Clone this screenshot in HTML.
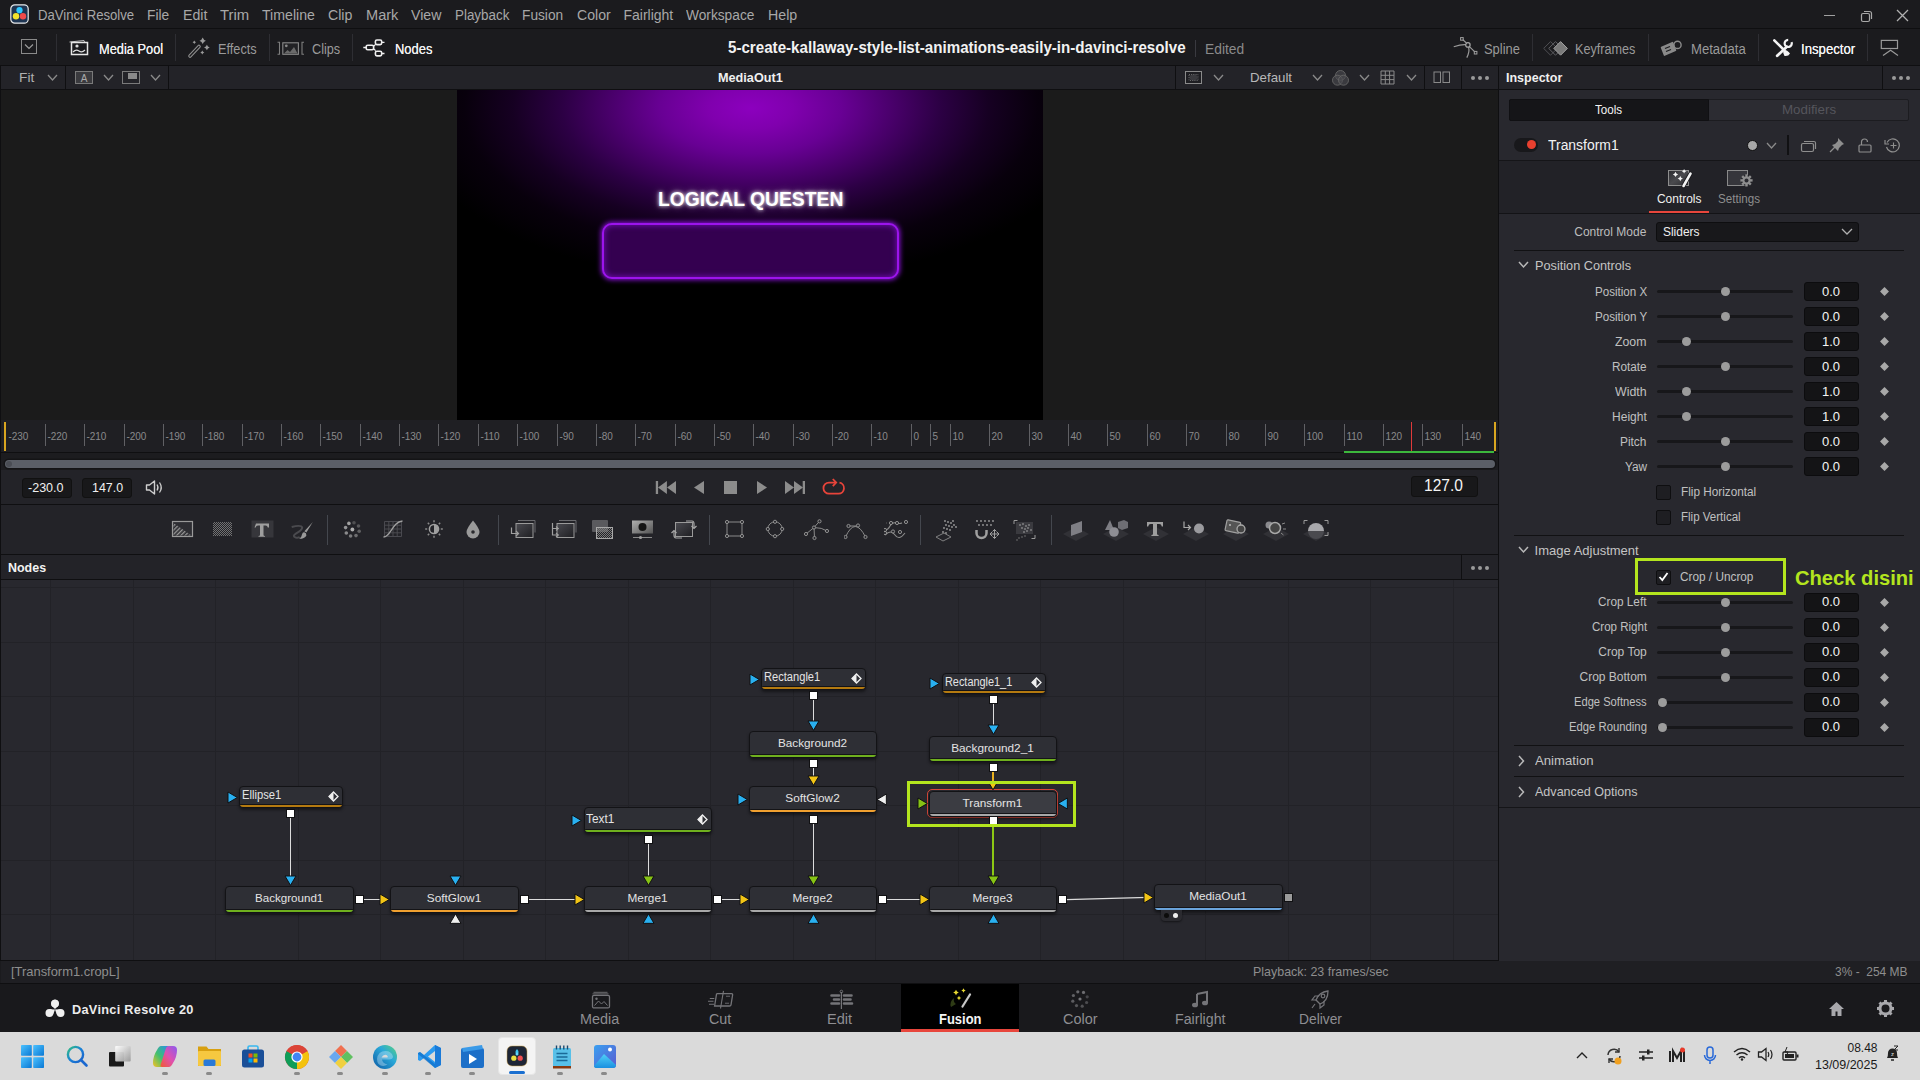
<!DOCTYPE html><html><head><meta charset="utf-8"><title>DaVinci Resolve</title><style>
*{margin:0;padding:0;box-sizing:border-box}
html,body{width:1920px;height:1080px;overflow:hidden;background:#1b1b1e;font-family:"Liberation Sans",sans-serif}
div,span,svg{position:absolute}
.t{transform-origin:0 0}
</style></head><body><div style="left:0px;top:0px;width:1920px;height:28px;background:#1b1b1e;"></div>
<div style="left:0px;top:28px;width:1920px;height:1px;background:#0f0f11;"></div>
<svg style="left:10px;top:4px;" width="20" height="21" viewBox="0 0 20 21"><rect x="0.8" y="0.8" width="17.4" height="18.4" rx="4" fill="#1e3552" stroke="#e8e8e8" stroke-width="1.2"/>
      <circle cx="9.5" cy="6.2" r="3.1" fill="#2ec8ff"/><circle cx="6" cy="12.2" r="3.2" fill="#f2e22a"/><circle cx="13" cy="12.2" r="3.2" fill="#f04a4a"/></svg>
<span class="t" style="left:38.46px;transform:scaleX(0.9386);top:8.10px;font-size:14px;line-height:14px;color:#a8a8a8;font-weight:400;white-space:nowrap;">DaVinci Resolve</span>
<span class="t" style="left:147.46px;transform:scaleX(0.9830);top:8.10px;font-size:14px;line-height:14px;color:#a8a8a8;font-weight:400;white-space:nowrap;">File</span>
<span class="t" style="left:182.96px;transform:scaleX(1.0106);top:8.10px;font-size:14px;line-height:14px;color:#a8a8a8;font-weight:400;white-space:nowrap;">Edit</span>
<span class="t" style="left:220.46px;transform:scaleX(1.0623);top:8.10px;font-size:14px;line-height:14px;color:#a8a8a8;font-weight:400;white-space:nowrap;">Trim</span>
<span class="t" style="left:262.46px;transform:scaleX(1.0093);top:8.10px;font-size:14px;line-height:14px;color:#a8a8a8;font-weight:400;white-space:nowrap;">Timeline</span>
<span class="t" style="left:328.16px;transform:scaleX(1.0106);top:8.10px;font-size:14px;line-height:14px;color:#a8a8a8;font-weight:400;white-space:nowrap;">Clip</span>
<span class="t" style="left:365.96px;transform:scaleX(1.0403);top:8.10px;font-size:14px;line-height:14px;color:#a8a8a8;font-weight:400;white-space:nowrap;">Mark</span>
<span class="t" style="left:411.16px;transform:scaleX(1.0095);top:8.10px;font-size:14px;line-height:14px;color:#a8a8a8;font-weight:400;white-space:nowrap;">View</span>
<span class="t" style="left:454.66px;transform:scaleX(0.9572);top:8.10px;font-size:14px;line-height:14px;color:#a8a8a8;font-weight:400;white-space:nowrap;">Playback</span>
<span class="t" style="left:522.16px;transform:scaleX(0.9797);top:8.10px;font-size:14px;line-height:14px;color:#a8a8a8;font-weight:400;white-space:nowrap;">Fusion</span>
<span class="t" style="left:576.66px;transform:scaleX(1.0063);top:8.10px;font-size:14px;line-height:14px;color:#a8a8a8;font-weight:400;white-space:nowrap;">Color</span>
<span class="t" style="left:623.46px;top:8.10px;font-size:14px;line-height:14px;color:#a8a8a8;font-weight:400;white-space:nowrap;">Fairlight</span>
<span class="t" style="left:686.16px;transform:scaleX(0.9799);top:8.10px;font-size:14px;line-height:14px;color:#a8a8a8;font-weight:400;white-space:nowrap;">Workspace</span>
<span class="t" style="left:767.96px;transform:scaleX(1.0133);top:8.10px;font-size:14px;line-height:14px;color:#a8a8a8;font-weight:400;white-space:nowrap;">Help</span>
<div style="left:1824px;top:15px;width:11px;height:1px;background:#a0a0a0;"></div>
<svg style="left:1858px;top:8px;" width="16" height="15" viewBox="0 0 16 15"><rect x="3.5" y="5.5" width="8" height="8" rx="1.5" fill="none" stroke="#a8a8a8" stroke-width="1.2"/><path d="M6 3.5 h5.5 a2 2 0 0 1 2 2 v5.5" fill="none" stroke="#a8a8a8" stroke-width="1.2"/></svg>
<svg style="left:1895px;top:8px;" width="15" height="15" viewBox="0 0 15 15"><path d="M2 2 L13 13 M13 2 L2 13" stroke="#b0b0b0" stroke-width="1.3"/></svg>
<div style="left:0px;top:29px;width:1920px;height:36px;background:#1b1b1e;"></div>
<div style="left:0px;top:65px;width:1920px;height:1px;background:#0f0f11;"></div>
<svg style="left:20px;top:38px;" width="18" height="17" viewBox="0 0 18 17"><rect x="1.5" y="1.5" width="15" height="14" fill="none" stroke="#8a8a8a" stroke-width="1"/><polyline points="5,6.5 9,10.5 13,6.5" fill="none" stroke="#9a9a9a" stroke-width="1.2"/></svg>
<div style="left:56px;top:34px;width:1px;height:27px;background:#2e2e33;"></div>
<svg style="left:67px;top:38px;" width="23" height="19" viewBox="0 0 23 19"><path d="M2.5 4 L17 2.5 L17.5 4" fill="none" stroke="#bbb" stroke-width="1"/><rect x="4.5" y="4.5" width="16" height="12" fill="none" stroke="#e6e6e6" stroke-width="1.5"/><circle cx="10" cy="8" r="1.6" fill="#ddd"/><path d="M6 14 q3-3 6-1 t6-1" fill="none" stroke="#ddd" stroke-width="1.2"/></svg>
<span class="t" style="left:99.16px;transform:scaleX(0.9162);top:42.10px;font-size:14px;line-height:14px;color:#f0f0f0;font-weight:400;white-space:nowrap;text-shadow:0 0 0.4px #f0f0f0;">Media Pool</span>
<div style="left:175px;top:34px;width:1px;height:27px;background:#2e2e33;"></div>
<svg style="left:187px;top:37px;" width="24" height="22" viewBox="0 0 24 22"><path d="M3 19 L12 9.5" stroke="#8e8e8e" stroke-width="3.6" stroke-linecap="round"/><path d="M3 19 L12 9.5" stroke="#1b1b1e" stroke-width="1.4" stroke-linecap="round"/><path d="M15.7 0.5999999999999996 Q16.5 3.0 18.9 3.8 Q16.5 4.6 15.7 7.0 Q14.899999999999999 4.6 12.5 3.8 Q14.899999999999999 3.0 15.7 0.5999999999999996z" fill="#9a9a9a"/><path d="M19.9 7.7 Q20.599999999999998 9.8 22.7 10.5 Q20.599999999999998 11.2 19.9 13.3 Q19.2 11.2 17.099999999999998 10.5 Q19.2 9.8 19.9 7.7z" fill="#9a9a9a"/><path d="M15.3 13.6 Q15.8 15.1 17.3 15.6 Q15.8 16.1 15.3 17.6 Q14.8 16.1 13.3 15.6 Q14.8 15.1 15.3 13.6z" fill="#9a9a9a"/><path d="M7.3 3.5999999999999996 Q7.725 4.875 9.0 5.3 Q7.725 5.725 7.3 7.0 Q6.875 5.725 5.6 5.3 Q6.875 4.875 7.3 3.5999999999999996z" fill="#9a9a9a"/></svg>
<span class="t" style="left:218.46px;transform:scaleX(0.9091);top:42.10px;font-size:14px;line-height:14px;color:#9a9a9a;font-weight:400;white-space:nowrap;">Effects</span>
<div style="left:269px;top:34px;width:1px;height:27px;background:#2e2e33;"></div>
<svg style="left:277px;top:40px;" width="28" height="16" viewBox="0 0 28 16"><path d="M0.5 2.3 h2 v12 h-2" fill="none" stroke="#7e7e7e" stroke-width="1.1"/><rect x="5.8" y="2.8" width="15.6" height="11.5" fill="#222225" stroke="#8a8a8a" stroke-width="1.1"/><circle cx="9.3" cy="5.8" r="1.4" fill="#8a8a8a"/><path d="M7 13.5 l3.5-3.5 2.5 2 4-5 3.5 6.5z" fill="#6a6a6a"/><path d="M27 2.3 h-2 v12 h2" fill="none" stroke="#7e7e7e" stroke-width="1.1"/></svg>
<span class="t" style="left:312.16px;transform:scaleX(0.9054);top:42.10px;font-size:14px;line-height:14px;color:#9a9a9a;font-weight:400;white-space:nowrap;">Clips</span>
<div style="left:352px;top:34px;width:1px;height:27px;background:#2e2e33;"></div>
<svg style="left:362px;top:38px;" width="24" height="20" viewBox="0 0 24 20"><rect x="4.2" y="7.2" width="7.4" height="4.6" rx="1.5" fill="none" stroke="#eeeeee" stroke-width="1.6"/><rect x="13.4" y="2" width="6.3" height="4.6" rx="1.5" fill="none" stroke="#eeeeee" stroke-width="1.6"/><rect x="13.4" y="13.25" width="6.3" height="4.6" rx="1.5" fill="none" stroke="#eeeeee" stroke-width="1.6"/><path d="M1.3 9.5 h2.9 M19.7 4.3 h2.8 M19.7 15.5 h2.8 M11.6 8.3 L13.6 6.4 M11.6 10.7 L13.6 12.6" fill="none" stroke="#eeeeee" stroke-width="1.3"/></svg>
<span class="t" style="left:395.46px;transform:scaleX(0.9237);top:42.10px;font-size:14px;line-height:14px;color:#f0f0f0;font-weight:400;white-space:nowrap;text-shadow:0 0 0.4px #f0f0f0;">Nodes</span>
<span class="t" style="left:728.48px;transform:scaleX(0.8902);top:39.05px;font-size:17px;line-height:17px;color:#f2f2f2;font-weight:700;white-space:nowrap;">5-create-kallaway-style-list-animations-easily-in-davinci-resolve</span>
<div style="left:1195px;top:40px;width:1px;height:17px;background:#3a3a40;"></div>
<span class="t" style="left:1205.46px;transform:scaleX(0.9868);top:42.10px;font-size:14px;line-height:14px;color:#8a8a8a;font-weight:400;white-space:nowrap;">Edited</span>
<svg style="left:1451px;top:35px;" width="30" height="24" viewBox="0 0 30 24"><path d="M2.75 11.75 Q10 9.3 14.8 9.6 M17.6 12.2 Q18.8 17 15.8 22.6 M15.6 8.2 L11.8 4.6 M18.4 11.6 L23.3 16.4" fill="none" stroke="#9a9a9a" stroke-width="1.2"/><circle cx="16.9" cy="9.9" r="2.2" fill="none" stroke="#a8a8a8" stroke-width="1.2"/><rect x="9.6" y="2.6" width="2.6" height="2.6" fill="none" stroke="#a0a0a0" stroke-width="1"/><rect x="23.3" y="16.4" width="2.6" height="2.6" fill="none" stroke="#a0a0a0" stroke-width="1"/></svg>
<span class="t" style="left:1484.16px;transform:scaleX(0.9218);top:42.10px;font-size:14px;line-height:14px;color:#9a9a9a;font-weight:400;white-space:nowrap;">Spline</span>
<div style="left:1532px;top:34px;width:1px;height:27px;background:#2e2e33;"></div>
<svg style="left:1543px;top:40px;" width="28" height="17" viewBox="0 0 28 17"><path d="M7.5 1.6 L14.3 8.4 L7.5 15.2 L0.7000000000000002 8.4z" fill="none" stroke="#505054" stroke-width="1"/><path d="M12.5 1.6 L19.3 8.4 L12.5 15.2 L5.7 8.4z" fill="none" stroke="#606064" stroke-width="1"/><path d="M17.6 1.6 L24.400000000000002 8.4 L17.6 15.2 L10.8 8.4z" fill="#7a7a7a" stroke="#a0a0a0" stroke-width="1"/></svg>
<span class="t" style="left:1575.46px;transform:scaleX(0.9022);top:42.10px;font-size:14px;line-height:14px;color:#9a9a9a;font-weight:400;white-space:nowrap;">Keyframes</span>
<div style="left:1648px;top:34px;width:1px;height:27px;background:#2e2e33;"></div>
<svg style="left:1660px;top:38px;" width="24" height="20" viewBox="0 0 24 20"><path d="M1.5 9.5 L12.5 4.6 L15.5 12.2 L4.5 17.1z" fill="#8a8a8a" stroke="#8a8a8a" stroke-width="1.5" stroke-linejoin="round"/><path d="M5 10.5 l5-2 M6 13.5 l5-2" stroke="#1b1b1e" stroke-width="1.3"/><circle cx="17.5" cy="6.9" r="3.6" fill="none" stroke="#8a8a8a" stroke-width="1.4"/></svg>
<span class="t" style="left:1691.16px;transform:scaleX(0.9367);top:42.10px;font-size:14px;line-height:14px;color:#9a9a9a;font-weight:400;white-space:nowrap;">Metadata</span>
<div style="left:1758px;top:34px;width:1px;height:27px;background:#2e2e33;"></div>
<svg style="left:1772px;top:37px;" width="22" height="22" viewBox="0 0 22 22"><path d="M2.3 3.3 L12 13" stroke="#f4f4f4" stroke-width="2.6" stroke-linecap="round"/><path d="M11.5 12.5 q4 0.5 6.5 4 q-1.5 3 -5.5 2.5 q-2 -3 -1-6.5z" fill="#f4f4f4"/><path d="M19.6 5.2 a3.6 3.6 0 1 1 -3.4 -2.4" fill="none" stroke="#f4f4f4" stroke-width="2.2"/><path d="M14.8 9.8 L5.2 18.8" stroke="#f4f4f4" stroke-width="2.8" stroke-linecap="round"/></svg>
<span class="t" style="left:1801.16px;transform:scaleX(0.9407);top:42.10px;font-size:14px;line-height:14px;color:#f4f4f4;font-weight:400;white-space:nowrap;text-shadow:0 0 0.4px #f0f0f0;">Inspector</span>
<div style="left:1867px;top:34px;width:1px;height:27px;background:#2e2e33;"></div>
<svg style="left:1878px;top:38px;" width="22" height="20" viewBox="0 0 22 20"><rect x="3.3" y="2.4" width="16.2" height="8.1" fill="none" stroke="#9a9a9a" stroke-width="1.2"/><path d="M5 17.5 L12.6 12.2 L20 17.5" fill="none" stroke="#9a9a9a" stroke-width="1.2"/></svg>
<div style="left:0px;top:66px;width:1498px;height:23px;background:#232328;"></div>
<div style="left:0px;top:89px;width:1498px;height:1px;background:#0f0f11;"></div>
<div style="left:0px;top:66px;width:1px;height:894px;background:#0f0f11;"></div>
<div style="left:65px;top:66px;width:1px;height:23px;background:#0f0f11;"></div>
<div style="left:168px;top:66px;width:1px;height:23px;background:#0f0f11;"></div>
<span class="t" style="left:18.52px;transform:scaleX(1.0558);top:71.45px;font-size:13px;line-height:13px;color:#b0b0b0;font-weight:400;white-space:nowrap;">Fit</span>
<svg style="left:47px;top:74px;" width="11" height="8" viewBox="0 0 11 8"><polyline points="1,1 5.5,6 10,1" fill="none" stroke="#8a8a8a" stroke-width="1.3"/></svg>
<svg style="left:74px;top:70px;" width="20" height="16" viewBox="0 0 20 16"><rect x="1.5" y="1.5" width="17" height="12" fill="#3a3a3e" stroke="#7a7a7a" stroke-width="1"/><text x="10" y="12" font-size="10" font-family="Liberation Sans" fill="#aaa" text-anchor="middle">A</text></svg>
<svg style="left:103px;top:74px;" width="11" height="8" viewBox="0 0 11 8"><polyline points="1,1 5.5,6 10,1" fill="none" stroke="#8a8a8a" stroke-width="1.3"/></svg>
<svg style="left:121px;top:70px;" width="20" height="16" viewBox="0 0 20 16"><rect x="1.5" y="1.5" width="17" height="12" fill="none" stroke="#7a7a7a" stroke-width="1"/><rect x="7" y="3" width="9" height="6" fill="#8a8a8a"/></svg>
<svg style="left:150px;top:74px;" width="11" height="8" viewBox="0 0 11 8"><polyline points="1,1 5.5,6 10,1" fill="none" stroke="#8a8a8a" stroke-width="1.3"/></svg>
<span class="t" style="left:718.02px;transform:scaleX(0.9743);top:71.45px;font-size:13px;line-height:13px;color:#f0f0f0;font-weight:700;white-space:nowrap;">MediaOut1</span>
<div style="left:1175px;top:66px;width:1px;height:23px;background:#0f0f11;"></div>
<svg style="left:1184px;top:70px;" width="20" height="15" viewBox="0 0 20 15"><rect x="1.5" y="1.5" width="16" height="12" fill="#1e1e22" stroke="#8a8a8a" stroke-width="1"/><ellipse cx="9.5" cy="7.5" rx="4" ry="3" fill="#3a3a3e"/><rect x="5" y="4.5" width="9" height="6" fill="none" stroke="#8a8a8a" stroke-width="0.8" stroke-dasharray="0.9,1.3"/></svg>
<svg style="left:1213px;top:74px;" width="11" height="8" viewBox="0 0 11 8"><polyline points="1,1 5.5,6 10,1" fill="none" stroke="#8a8a8a" stroke-width="1.3"/></svg>
<span class="t" style="left:1250.02px;transform:scaleX(1.0208);top:71.45px;font-size:13px;line-height:13px;color:#b8b8b8;font-weight:400;white-space:nowrap;">Default</span>
<svg style="left:1312px;top:74px;" width="11" height="8" viewBox="0 0 11 8"><polyline points="1,1 5.5,6 10,1" fill="none" stroke="#8a8a8a" stroke-width="1.3"/></svg>
<svg style="left:1331px;top:69px;" width="19" height="18" viewBox="0 0 19 18"><circle cx="9.5" cy="6.5" r="5" fill="#4a4a4e" fill-opacity="0.6" stroke="#666" stroke-width="0.9"/><circle cx="6.5" cy="11.2" r="5" fill="#4a4a4e" fill-opacity="0.6" stroke="#666" stroke-width="0.9"/><circle cx="12.5" cy="11.2" r="5" fill="#4a4a4e" fill-opacity="0.6" stroke="#666" stroke-width="0.9"/></svg>
<svg style="left:1359px;top:74px;" width="11" height="8" viewBox="0 0 11 8"><polyline points="1,1 5.5,6 10,1" fill="none" stroke="#8a8a8a" stroke-width="1.3"/></svg>
<svg style="left:1380px;top:70px;" width="15" height="15" viewBox="0 0 15 15"><path d="M1 1 h13 v13 h-13z M1 5.3 h13 M1 9.6 h13 M5.3 1 v13 M9.6 1 v13" fill="none" stroke="#8a8a8a" stroke-width="1"/></svg>
<svg style="left:1406px;top:74px;" width="11" height="8" viewBox="0 0 11 8"><polyline points="1,1 5.5,6 10,1" fill="none" stroke="#8a8a8a" stroke-width="1.3"/></svg>
<div style="left:1424px;top:66px;width:1px;height:23px;background:#0f0f11;"></div>
<svg style="left:1433px;top:70px;" width="18" height="14" viewBox="0 0 18 14"><rect x="1" y="2" width="6.5" height="10.5" fill="none" stroke="#8a8a8a" stroke-width="1"/><rect x="10" y="2" width="6.5" height="10.5" fill="none" stroke="#8a8a8a" stroke-width="1"/></svg>
<div style="left:1461px;top:66px;width:1px;height:23px;background:#0f0f11;"></div>
<div style="left:1471.0px;top:75.5px;width:4px;height:4px;border-radius:50%;background:#9a9a9a"></div>
<div style="left:1478.2px;top:75.5px;width:4px;height:4px;border-radius:50%;background:#9a9a9a"></div>
<div style="left:1485.4px;top:75.5px;width:4px;height:4px;border-radius:50%;background:#9a9a9a"></div>
<div style="left:1px;top:90px;width:1497px;height:330px;background:#1b1b1b;"></div>
<div style="left:457px;top:90px;width:586px;height:330px;background:#000;overflow:hidden">
      <div style="left:-56px;top:-157px;width:700px;height:350px;border-radius:50%;background:radial-gradient(closest-side, #8c00be 0%, #8000ae 12%, #680094 26%, #4a006c 40%, #2c0044 54%, #160022 68%, #08000c 82%, rgba(0,0,0,0) 100%)"></div>
    </div>
<span class="t" style="left:657.80px;transform:scaleX(0.9663);top:188.80px;font-size:20px;line-height:20px;color:#ffffff;font-weight:700;white-space:nowrap;text-shadow:0 0 4px rgba(255,255,255,0.9),0 0 8px rgba(255,255,255,0.5);">LOGICAL QUESTEN</span>
<div style="left:602px;top:223px;width:297px;height:56px;border:2.2px solid #9c14ec;border-radius:10px;background:#340050;box-shadow:0 0 5px 1px #8a10d8, inset 0 0 6px #7a10c0"></div>
<div style="left:1px;top:420px;width:1497px;height:32px;background:#1f1f23;"></div>
<div style="left:1px;top:452px;width:1497px;height:1px;background:#0f0f11;"></div>
<span class="t" style="left:8.40px;top:432.00px;font-size:10px;line-height:10px;color:#8a8a8c;font-weight:400;white-space:nowrap;">-230</span>
<div style="left:45px;top:424px;width:1px;height:22px;background:#606064;"></div>
<span class="t" style="left:47.40px;top:432.00px;font-size:10px;line-height:10px;color:#8a8a8c;font-weight:400;white-space:nowrap;">-220</span>
<div style="left:84px;top:424px;width:1px;height:22px;background:#606064;"></div>
<span class="t" style="left:86.40px;top:432.00px;font-size:10px;line-height:10px;color:#8a8a8c;font-weight:400;white-space:nowrap;">-210</span>
<div style="left:124px;top:424px;width:1px;height:22px;background:#606064;"></div>
<span class="t" style="left:126.40px;top:432.00px;font-size:10px;line-height:10px;color:#8a8a8c;font-weight:400;white-space:nowrap;">-200</span>
<div style="left:163px;top:424px;width:1px;height:22px;background:#606064;"></div>
<span class="t" style="left:165.40px;top:432.00px;font-size:10px;line-height:10px;color:#8a8a8c;font-weight:400;white-space:nowrap;">-190</span>
<div style="left:202px;top:424px;width:1px;height:22px;background:#606064;"></div>
<span class="t" style="left:204.40px;top:432.00px;font-size:10px;line-height:10px;color:#8a8a8c;font-weight:400;white-space:nowrap;">-180</span>
<div style="left:242px;top:424px;width:1px;height:22px;background:#606064;"></div>
<span class="t" style="left:244.40px;top:432.00px;font-size:10px;line-height:10px;color:#8a8a8c;font-weight:400;white-space:nowrap;">-170</span>
<div style="left:281px;top:424px;width:1px;height:22px;background:#606064;"></div>
<span class="t" style="left:283.40px;top:432.00px;font-size:10px;line-height:10px;color:#8a8a8c;font-weight:400;white-space:nowrap;">-160</span>
<div style="left:320px;top:424px;width:1px;height:22px;background:#606064;"></div>
<span class="t" style="left:322.40px;top:432.00px;font-size:10px;line-height:10px;color:#8a8a8c;font-weight:400;white-space:nowrap;">-150</span>
<div style="left:360px;top:424px;width:1px;height:22px;background:#606064;"></div>
<span class="t" style="left:362.40px;top:432.00px;font-size:10px;line-height:10px;color:#8a8a8c;font-weight:400;white-space:nowrap;">-140</span>
<div style="left:399px;top:424px;width:1px;height:22px;background:#606064;"></div>
<span class="t" style="left:401.40px;top:432.00px;font-size:10px;line-height:10px;color:#8a8a8c;font-weight:400;white-space:nowrap;">-130</span>
<div style="left:438px;top:424px;width:1px;height:22px;background:#606064;"></div>
<span class="t" style="left:440.40px;top:432.00px;font-size:10px;line-height:10px;color:#8a8a8c;font-weight:400;white-space:nowrap;">-120</span>
<div style="left:478px;top:424px;width:1px;height:22px;background:#606064;"></div>
<span class="t" style="left:480.40px;top:432.00px;font-size:10px;line-height:10px;color:#8a8a8c;font-weight:400;white-space:nowrap;">-110</span>
<div style="left:517px;top:424px;width:1px;height:22px;background:#606064;"></div>
<span class="t" style="left:519.40px;top:432.00px;font-size:10px;line-height:10px;color:#8a8a8c;font-weight:400;white-space:nowrap;">-100</span>
<div style="left:557px;top:424px;width:1px;height:22px;background:#606064;"></div>
<span class="t" style="left:559.40px;top:432.00px;font-size:10px;line-height:10px;color:#8a8a8c;font-weight:400;white-space:nowrap;">-90</span>
<div style="left:596px;top:424px;width:1px;height:22px;background:#606064;"></div>
<span class="t" style="left:598.40px;top:432.00px;font-size:10px;line-height:10px;color:#8a8a8c;font-weight:400;white-space:nowrap;">-80</span>
<div style="left:635px;top:424px;width:1px;height:22px;background:#606064;"></div>
<span class="t" style="left:637.40px;top:432.00px;font-size:10px;line-height:10px;color:#8a8a8c;font-weight:400;white-space:nowrap;">-70</span>
<div style="left:675px;top:424px;width:1px;height:22px;background:#606064;"></div>
<span class="t" style="left:677.40px;top:432.00px;font-size:10px;line-height:10px;color:#8a8a8c;font-weight:400;white-space:nowrap;">-60</span>
<div style="left:714px;top:424px;width:1px;height:22px;background:#606064;"></div>
<span class="t" style="left:716.40px;top:432.00px;font-size:10px;line-height:10px;color:#8a8a8c;font-weight:400;white-space:nowrap;">-50</span>
<div style="left:753px;top:424px;width:1px;height:22px;background:#606064;"></div>
<span class="t" style="left:755.40px;top:432.00px;font-size:10px;line-height:10px;color:#8a8a8c;font-weight:400;white-space:nowrap;">-40</span>
<div style="left:793px;top:424px;width:1px;height:22px;background:#606064;"></div>
<span class="t" style="left:795.40px;top:432.00px;font-size:10px;line-height:10px;color:#8a8a8c;font-weight:400;white-space:nowrap;">-30</span>
<div style="left:832px;top:424px;width:1px;height:22px;background:#606064;"></div>
<span class="t" style="left:834.40px;top:432.00px;font-size:10px;line-height:10px;color:#8a8a8c;font-weight:400;white-space:nowrap;">-20</span>
<div style="left:871px;top:424px;width:1px;height:22px;background:#606064;"></div>
<span class="t" style="left:873.40px;top:432.00px;font-size:10px;line-height:10px;color:#8a8a8c;font-weight:400;white-space:nowrap;">-10</span>
<div style="left:911px;top:424px;width:1px;height:22px;background:#606064;"></div>
<span class="t" style="left:913.40px;top:432.00px;font-size:10px;line-height:10px;color:#8a8a8c;font-weight:400;white-space:nowrap;">0</span>
<div style="left:950px;top:424px;width:1px;height:22px;background:#606064;"></div>
<span class="t" style="left:952.40px;top:432.00px;font-size:10px;line-height:10px;color:#8a8a8c;font-weight:400;white-space:nowrap;">10</span>
<div style="left:989px;top:424px;width:1px;height:22px;background:#606064;"></div>
<span class="t" style="left:991.40px;top:432.00px;font-size:10px;line-height:10px;color:#8a8a8c;font-weight:400;white-space:nowrap;">20</span>
<div style="left:1029px;top:424px;width:1px;height:22px;background:#606064;"></div>
<span class="t" style="left:1031.40px;top:432.00px;font-size:10px;line-height:10px;color:#8a8a8c;font-weight:400;white-space:nowrap;">30</span>
<div style="left:1068px;top:424px;width:1px;height:22px;background:#606064;"></div>
<span class="t" style="left:1070.40px;top:432.00px;font-size:10px;line-height:10px;color:#8a8a8c;font-weight:400;white-space:nowrap;">40</span>
<div style="left:1107px;top:424px;width:1px;height:22px;background:#606064;"></div>
<span class="t" style="left:1109.40px;top:432.00px;font-size:10px;line-height:10px;color:#8a8a8c;font-weight:400;white-space:nowrap;">50</span>
<div style="left:1147px;top:424px;width:1px;height:22px;background:#606064;"></div>
<span class="t" style="left:1149.40px;top:432.00px;font-size:10px;line-height:10px;color:#8a8a8c;font-weight:400;white-space:nowrap;">60</span>
<div style="left:1186px;top:424px;width:1px;height:22px;background:#606064;"></div>
<span class="t" style="left:1188.40px;top:432.00px;font-size:10px;line-height:10px;color:#8a8a8c;font-weight:400;white-space:nowrap;">70</span>
<div style="left:1226px;top:424px;width:1px;height:22px;background:#606064;"></div>
<span class="t" style="left:1228.40px;top:432.00px;font-size:10px;line-height:10px;color:#8a8a8c;font-weight:400;white-space:nowrap;">80</span>
<div style="left:1265px;top:424px;width:1px;height:22px;background:#606064;"></div>
<span class="t" style="left:1267.40px;top:432.00px;font-size:10px;line-height:10px;color:#8a8a8c;font-weight:400;white-space:nowrap;">90</span>
<div style="left:1304px;top:424px;width:1px;height:22px;background:#606064;"></div>
<span class="t" style="left:1306.40px;top:432.00px;font-size:10px;line-height:10px;color:#8a8a8c;font-weight:400;white-space:nowrap;">100</span>
<div style="left:1344px;top:424px;width:1px;height:22px;background:#606064;"></div>
<span class="t" style="left:1346.40px;top:432.00px;font-size:10px;line-height:10px;color:#8a8a8c;font-weight:400;white-space:nowrap;">110</span>
<div style="left:1383px;top:424px;width:1px;height:22px;background:#606064;"></div>
<span class="t" style="left:1385.40px;top:432.00px;font-size:10px;line-height:10px;color:#8a8a8c;font-weight:400;white-space:nowrap;">120</span>
<div style="left:1422px;top:424px;width:1px;height:22px;background:#606064;"></div>
<span class="t" style="left:1424.40px;top:432.00px;font-size:10px;line-height:10px;color:#8a8a8c;font-weight:400;white-space:nowrap;">130</span>
<div style="left:1462px;top:424px;width:1px;height:22px;background:#606064;"></div>
<span class="t" style="left:1464.40px;top:432.00px;font-size:10px;line-height:10px;color:#8a8a8c;font-weight:400;white-space:nowrap;">140</span>
<div style="left:930px;top:424px;width:1px;height:22px;background:#606064;"></div>
<span class="t" style="left:932.40px;top:432.00px;font-size:10px;line-height:10px;color:#8a8a8c;font-weight:400;white-space:nowrap;">5</span>
<div style="left:4px;top:422px;width:2px;height:29px;background:#d8a520;"></div>
<div style="left:1494px;top:422px;width:2px;height:29px;background:#d8a520;"></div>
<div style="left:1411px;top:422px;width:1px;height:29px;background:#e03a3a;"></div>
<div style="left:1344px;top:451px;width:150px;height:1.5px;background:#3cb83c;"></div>
<div style="left:1px;top:453px;width:1497px;height:17px;background:#1c1c1f;"></div>
<div style="left:5px;top:460px;width:1490px;height:8px;border-radius:4px;background:#5b5f67;box-shadow:0 0 0 1.5px #141416"></div>
<div style="left:6px;top:461px;width:6px;height:6px;border-radius:50%;background:#4a4d54"></div>
<div style="left:1px;top:470px;width:1497px;height:34px;background:#232328;"></div>
<div style="left:1px;top:504px;width:1497px;height:1px;background:#0f0f11;"></div>
<div style="left:22px;top:478px;width:50px;height:20px;border-radius:3px;background:#18181a;border:1px solid #111"></div>
<span class="t" style="left:28.22px;transform:scaleX(0.9643);top:481.45px;font-size:13px;line-height:13px;color:#f0f0f0;font-weight:400;white-space:nowrap;">-230.0</span>
<div style="left:82px;top:478px;width:50px;height:20px;border-radius:3px;background:#18181a;border:1px solid #111"></div>
<span class="t" style="left:91.52px;transform:scaleX(0.9543);top:481.45px;font-size:13px;line-height:13px;color:#f0f0f0;font-weight:400;white-space:nowrap;">147.0</span>
<svg style="left:145px;top:480px;" width="19" height="15" viewBox="0 0 19 15"><path d="M1.5 5 h3 l5-4 v13 l-5-4 h-3z" fill="none" stroke="#cfcfcf" stroke-width="1.4" stroke-linejoin="round"/><path d="M12 4.5 q2 3 0 6 M14.5 2.5 q3.5 5 0 10" fill="none" stroke="#cfcfcf" stroke-width="1.3"/></svg>
<svg style="left:655px;top:480px;" width="22" height="15" viewBox="0 0 22 15"><rect x="0.8" y="1" width="2.3" height="13" fill="#8c8c8c"/><path d="M11.9 1 L3 7.5 L11.9 14z M21 1 L12 7.5 L21 14z" fill="#8c8c8c"/></svg>
<svg style="left:693px;top:480px;" width="12" height="15" viewBox="0 0 12 15"><path d="M11 1 L1 7.5 L11 14z" fill="#8c8c8c"/></svg>
<div style="left:724px;top:481px;width:13px;height:13px;background:#8c8c8c;"></div>
<svg style="left:756px;top:480px;" width="12" height="15" viewBox="0 0 12 15"><path d="M1 1 L11 7.5 L1 14z" fill="#8c8c8c"/></svg>
<svg style="left:784px;top:480px;" width="22" height="15" viewBox="0 0 22 15"><path d="M1 1 L10 7.5 L1 14z M10 1 L19 7.5 L10 14z" fill="#8c8c8c"/><rect x="18.7" y="1" width="2.3" height="13" fill="#8c8c8c"/></svg>
<svg style="left:822px;top:477px;" width="24" height="19" viewBox="0 0 24 19"><path d="M13 5.6 H7 A5.55 5.55 0 0 0 7 16.7 H16.5 A5.55 5.55 0 0 0 17.5 5.7" fill="none" stroke="#e8443a" stroke-width="1.8"/><path d="M10.8 2 L14.2 5.6 L10.8 9.2" fill="none" stroke="#e8443a" stroke-width="1.8"/></svg>
<div style="left:1411px;top:476px;width:67px;height:21px;border-radius:3px;background:#18181a;border:1px solid #111"></div>
<span class="t" style="left:1423.54px;transform:scaleX(0.9719);top:478.40px;font-size:16px;line-height:16px;color:#f4f4f4;font-weight:400;white-space:nowrap;">127.0</span>
<div style="left:1px;top:505px;width:1497px;height:50px;background:#232328;"></div>
<div style="left:1px;top:554px;width:1497px;height:1px;background:#0f0f11;"></div>
<svg style="left:0;top:0" width="0" height="0"><defs>
      <linearGradient id="gd" x1="0" y1="0" x2="1" y2="1"><stop offset="0" stop-color="#4a4a50"/><stop offset="1" stop-color="#1e1e22"/></linearGradient>
      <linearGradient id="gl" x1="0" y1="0" x2="1" y2="1"><stop offset="0" stop-color="#b0b0b0"/><stop offset="1" stop-color="#555"/></linearGradient>
      <pattern id="hat" width="3" height="3" patternUnits="userSpaceOnUse" patternTransform="rotate(45)"><rect width="1.3" height="3" fill="#9a9a9a"/></pattern>
      <pattern id="chk" width="2" height="2" patternUnits="userSpaceOnUse"><rect width="1" height="1" fill="#7a7a7a"/><rect x="1" y="1" width="1" height="1" fill="#7a7a7a"/></pattern>
    </defs></svg>
<svg style="left:171px;top:519px;" width="30" height="23" viewBox="0 0 30 23"><rect x="1.5" y="2.5" width="20" height="15" fill="#2e2e33" stroke="#9a9a9a" stroke-width="1.2"/><path d="M2.5 4 L20.5 16.5 H2.5z" fill="url(#hat)"/></svg>
<svg style="left:211px;top:519px;" width="30" height="23" viewBox="0 0 30 23"><rect x="2" y="3" width="19" height="14" fill="url(#chk)" opacity="0.9"/></svg>
<svg style="left:251px;top:519px;" width="30" height="23" viewBox="0 0 30 23"><rect x="0.5" y="1.5" width="22" height="17" fill="#36363b"/><path d="M5 4.5 h13 v4 h-1.2 q-0.3-2-2.3-2 h-2 v9.5 q0 1 1.5 1 v0.8 h-6.5 v-0.8 q1.5 0 1.5-1 v-9.5 h-2 q-2 0-2.3 2 h-1.2z" fill="#9e9e9e"/></svg>
<svg style="left:291px;top:519px;" width="30" height="23" viewBox="0 0 30 23"><path d="M0.7 8 q9.5 -2.5 10.5 0.5 q0 2.5 -6 5.8 q-4.5 3 -0.5 4.2 q3 0.6 4-0.6" fill="none" stroke="#4a4a4e" stroke-width="2"/><path d="M21.8 3 L15.4 13.4 L13.4 12.2z" fill="#9a9a9a"/><path d="M13.2 13.2 q2.4 0.6 2.2 3.2 q-1.8 3.4 -7.2 3.4 q2.6 -2 2.8 -4.4 q0.6 -2.4 2.2 -2.2z" fill="#9a9a9a"/></svg>
<svg style="left:341px;top:519px;" width="30" height="23" viewBox="0 0 30 23"><circle cx="11.4" cy="10.5" r="1.9" fill="#b0b0b0"/><circle cx="7.9" cy="4.4" r="1.8" fill="#a0a0a0"/><circle cx="13" cy="3.7" r="1.8" fill="#505052"/><circle cx="17.5" cy="7" r="1.8" fill="#58585a"/><circle cx="18.2" cy="12.3" r="1.8" fill="#606062"/><circle cx="15" cy="16.6" r="1.8" fill="#6e6e70"/><circle cx="9.6" cy="17" r="1.8" fill="#7a7a7c"/><circle cx="5.3" cy="14" r="1.8" fill="#8a8a8c"/><circle cx="4.6" cy="8.6" r="1.8" fill="#959597"/></svg>
<svg style="left:382px;top:519px;" width="30" height="23" viewBox="0 0 30 23"><path d="M2.5 2.5 h17 v15 h-17z M2.5 6.2 h17 M2.5 10 h17 M2.5 13.8 h17 M6.8 2.5 v15 M11 2.5 v15 M15.2 2.5 v15" fill="none" stroke="#4e4e54" stroke-width="0.9"/><path d="M1.5 18 C9 18 10 3 20.5 2" fill="none" stroke="#a0a0a0" stroke-width="1.3"/></svg>
<svg style="left:423px;top:519px;" width="30" height="23" viewBox="0 0 30 23"><circle cx="11" cy="10" r="4.6" fill="none" stroke="#a0a0a0" stroke-width="1.5"/><path d="M11 5.4 a4.6 4.6 0 0 1 0 9.2z" fill="#a0a0a0"/><path d="M17.8 10.0 L19.8 10.0" stroke="#8a8a8a" stroke-width="1.5"/><path d="M15.8 14.8 L17.2 16.2" stroke="#8a8a8a" stroke-width="1.5"/><path d="M11.0 16.8 L11.0 18.8" stroke="#8a8a8a" stroke-width="1.5"/><path d="M6.2 14.8 L4.8 16.2" stroke="#8a8a8a" stroke-width="1.5"/><path d="M4.2 10.0 L2.2 10.0" stroke="#8a8a8a" stroke-width="1.5"/><path d="M6.2 5.2 L4.8 3.8" stroke="#8a8a8a" stroke-width="1.5"/><path d="M11.0 3.2 L11.0 1.2" stroke="#8a8a8a" stroke-width="1.5"/><path d="M15.8 5.2 L17.2 3.8" stroke="#8a8a8a" stroke-width="1.5"/></svg>
<svg style="left:462px;top:519px;" width="30" height="23" viewBox="0 0 30 23"><path d="M11 1.5 q6.5 8 6.5 11.5 a6.5 6.5 0 0 1 -13 0 q0-3.5 6.5-11.5z" fill="#9a9a9a"/><circle cx="11" cy="13" r="1.8" fill="#2a2a2e"/></svg>
<svg style="left:510px;top:519px;" width="30" height="23" viewBox="0 0 30 23"><path d="M8 1.5 h17 v12" fill="none" stroke="#6a6a6e" stroke-width="1"/><rect x="6" y="4.5" width="17" height="14" fill="url(#gd)" stroke="#9a9a9a" stroke-width="1"/><path d="M1.5 8.5 v6 h7" fill="none" stroke="#a0a0a0" stroke-width="1.2"/><path d="M6 12 l2.5 2.5 -2.5 2.5" fill="none" stroke="#a0a0a0" stroke-width="1.2"/></svg>
<svg style="left:551px;top:519px;" width="30" height="23" viewBox="0 0 30 23"><path d="M8 1.5 h17 v12" fill="none" stroke="#6a6a6e" stroke-width="1"/><rect x="6" y="4.5" width="17" height="14" fill="url(#gd)" stroke="#9a9a9a" stroke-width="1"/><path d="M1.5 4 v12 h6 M1.5 9.5 h6" fill="none" stroke="#a0a0a0" stroke-width="1.2"/><path d="M5 7.5 l2.2 2 -2.2 2 M5 14 l2.2 2 -2.2 2" fill="none" stroke="#a0a0a0" stroke-width="1.1"/></svg>
<svg style="left:591px;top:519px;" width="30" height="23" viewBox="0 0 30 23"><rect x="1" y="1" width="16" height="12" rx="1" fill="#5a5a5e"/><rect x="5.5" y="8.5" width="16" height="11" fill="url(#chk)" stroke="#a8a8a8" stroke-width="1"/></svg>
<svg style="left:631px;top:519px;" width="30" height="23" viewBox="0 0 30 23"><rect x="1" y="1.5" width="21" height="13" fill="url(#gl)"/><circle cx="11.5" cy="8" r="4" fill="#151515"/><path d="M2 18.5 h19" stroke="#8a8a8a" stroke-width="1"/><circle cx="9.5" cy="18.5" r="1.6" fill="#a0a0a0"/></svg>
<svg style="left:671px;top:519px;" width="30" height="23" viewBox="0 0 30 23"><rect x="4.5" y="3.5" width="17" height="14" fill="url(#gd)" stroke="#9a9a9a" stroke-width="1"/><path d="M15 2 h6 q2 0 2 3 v4" fill="none" stroke="#a8a8a8" stroke-width="1.2"/><path d="M20.5 7 l2.5 2.5 2.5-2.5" fill="none" stroke="#a8a8a8" stroke-width="1.2"/><path d="M11 19 h-6 q-2 0-2-3 v-4" fill="none" stroke="#a8a8a8" stroke-width="1.2"/><path d="M0.5 14 l2.5-2.5 2.5 2.5" fill="none" stroke="#a8a8a8" stroke-width="1.2"/></svg>
<svg style="left:723px;top:519px;" width="30" height="23" viewBox="0 0 30 23"><rect x="4" y="3" width="15" height="14" fill="none" stroke="#8a8a8a" stroke-width="1"/><circle cx="4" cy="3" r="1.6" fill="#28282d" stroke="#9a9a9a" stroke-width="0.9"/><circle cx="19" cy="3" r="1.6" fill="#28282d" stroke="#9a9a9a" stroke-width="0.9"/><circle cx="4" cy="17" r="1.6" fill="#28282d" stroke="#9a9a9a" stroke-width="0.9"/><circle cx="19" cy="17" r="1.6" fill="#28282d" stroke="#9a9a9a" stroke-width="0.9"/></svg>
<svg style="left:764px;top:519px;" width="30" height="23" viewBox="0 0 30 23"><circle cx="11" cy="10" r="7.2" fill="none" stroke="#8a8a8a" stroke-width="1"/><circle cx="11" cy="2.8" r="1.6" fill="#28282d" stroke="#9a9a9a" stroke-width="0.9"/><circle cx="3.8" cy="10" r="1.6" fill="#28282d" stroke="#9a9a9a" stroke-width="0.9"/><circle cx="18.2" cy="10" r="1.6" fill="#28282d" stroke="#9a9a9a" stroke-width="0.9"/><circle cx="11" cy="17.2" r="1.6" fill="#28282d" stroke="#9a9a9a" stroke-width="0.9"/></svg>
<svg style="left:804px;top:519px;" width="30" height="23" viewBox="0 0 30 23"><path d="M2 15 L10 8.5 L15.5 2.3 M10 8.5 q8 0 13 3.5 M10 8.5 L10.5 19" fill="none" stroke="#8a8a8a" stroke-width="1"/><circle cx="2" cy="15" r="1.6" fill="#28282d" stroke="#9a9a9a" stroke-width="0.9"/><circle cx="10" cy="8.5" r="1.6" fill="#28282d" stroke="#9a9a9a" stroke-width="0.9"/><circle cx="15.5" cy="2.3" r="1.6" fill="#28282d" stroke="#9a9a9a" stroke-width="0.9"/><circle cx="23" cy="12" r="1.6" fill="#28282d" stroke="#9a9a9a" stroke-width="0.9"/><circle cx="10.5" cy="19" r="1.6" fill="#28282d" stroke="#9a9a9a" stroke-width="0.9"/></svg>
<svg style="left:844px;top:519px;" width="30" height="23" viewBox="0 0 30 23"><path d="M1.5 18 Q11 -3 21.5 18 M4.5 7 h9.5" fill="none" stroke="#8a8a8a" stroke-width="1"/><circle cx="1.5" cy="18" r="1.6" fill="#28282d" stroke="#9a9a9a" stroke-width="0.9"/><circle cx="21.5" cy="18" r="1.6" fill="#28282d" stroke="#9a9a9a" stroke-width="0.9"/><circle cx="4.5" cy="7" r="1.6" fill="#28282d" stroke="#9a9a9a" stroke-width="0.9"/><circle cx="14" cy="6.5" r="1.6" fill="#28282d" stroke="#9a9a9a" stroke-width="0.9"/></svg>
<svg style="left:884px;top:519px;" width="30" height="23" viewBox="0 0 30 23"><path d="M1 11 q3 0 5-4 t6-3 t6 0 M1 16 q6-6 10 0 t10-2" fill="none" stroke="#8a8a8a" stroke-width="1.1"/><path d="M2 4 h18" stroke="#666" stroke-width="0.8" stroke-dasharray="1,2"/><circle cx="1" cy="11" r="1.6" fill="#28282d" stroke="#9a9a9a" stroke-width="0.9"/><circle cx="7" cy="4" r="1.6" fill="#28282d" stroke="#9a9a9a" stroke-width="0.9"/><circle cx="13" cy="4" r="1.6" fill="#28282d" stroke="#9a9a9a" stroke-width="0.9"/><circle cx="22" cy="3" r="1.6" fill="#28282d" stroke="#9a9a9a" stroke-width="0.9"/><circle cx="1" cy="14" r="1.6" fill="#28282d" stroke="#9a9a9a" stroke-width="0.9"/><circle cx="9" cy="12.5" r="1.6" fill="#28282d" stroke="#9a9a9a" stroke-width="0.9"/><circle cx="16" cy="13" r="1.6" fill="#28282d" stroke="#9a9a9a" stroke-width="0.9"/></svg>
<svg style="left:934.5px;top:519px;" width="30" height="23" viewBox="0 0 30 23"><circle cx="10" cy="2" r="0.9" fill="#9a9a9a"/><circle cx="13" cy="3" r="0.9" fill="#9a9a9a"/><circle cx="16" cy="4" r="0.9" fill="#9a9a9a"/><circle cx="19" cy="6" r="0.9" fill="#9a9a9a"/><circle cx="11" cy="6" r="0.9" fill="#9a9a9a"/><circle cx="14" cy="7" r="0.9" fill="#9a9a9a"/><circle cx="17" cy="8" r="0.9" fill="#9a9a9a"/><circle cx="9" cy="9" r="0.9" fill="#9a9a9a"/><circle cx="12" cy="10" r="0.9" fill="#9a9a9a"/><circle cx="15" cy="11" r="0.9" fill="#9a9a9a"/><circle cx="8" cy="13" r="0.9" fill="#9a9a9a"/><circle cx="11" cy="14" r="0.9" fill="#9a9a9a"/><circle cx="21" cy="8" r="0.9" fill="#9a9a9a"/><circle cx="18" cy="2" r="0.9" fill="#9a9a9a"/><path d="M1 18 L9 14 L16 18 L8 22z" fill="none" stroke="#8a8a8a" stroke-width="0.9"/></svg>
<svg style="left:973.5px;top:519px;" width="30" height="23" viewBox="0 0 30 23"><circle cx="3" cy="2" r="0.9" fill="#9a9a9a"/><circle cx="7" cy="2" r="0.9" fill="#9a9a9a"/><circle cx="11" cy="2" r="0.9" fill="#9a9a9a"/><circle cx="15" cy="2" r="0.9" fill="#9a9a9a"/><circle cx="19" cy="2" r="0.9" fill="#9a9a9a"/><circle cx="5" cy="6" r="0.9" fill="#9a9a9a"/><circle cx="9" cy="6" r="0.9" fill="#9a9a9a"/><circle cx="13" cy="6" r="0.9" fill="#9a9a9a"/><circle cx="17" cy="6" r="0.9" fill="#9a9a9a"/><path d="M2.5 11 v3 a5 5 0 0 0 10 0 v-3" fill="none" stroke="#a0a0a0" stroke-width="2.5"/><path d="M16 15 h9 M20.5 10.5 v9 M18.5 12.5 l2-2 2 2 M18.5 17.5 l2 2 2-2 M18 13 l-2 2 2 2 M23 13 l2 2 -2 2" fill="none" stroke="#a0a0a0" stroke-width="1"/></svg>
<svg style="left:1012.5px;top:519px;" width="30" height="23" viewBox="0 0 30 23"><path d="M1 5 v-3.5 h3.5 M22 16 v3.5 h-3.5" fill="none" stroke="#9a9a9a" stroke-width="1"/><rect x="3" y="3" width="17" height="12" fill="#3a3a3f"/><circle cx="7" cy="6" r="0.8" fill="#b0b0b0"/><circle cx="10" cy="5" r="0.8" fill="#b0b0b0"/><circle cx="13" cy="7" r="0.8" fill="#b0b0b0"/><circle cx="16" cy="6" r="0.8" fill="#b0b0b0"/><circle cx="9" cy="9" r="0.8" fill="#b0b0b0"/><circle cx="12" cy="10" r="0.8" fill="#b0b0b0"/><circle cx="15" cy="9" r="0.8" fill="#b0b0b0"/><circle cx="18" cy="11" r="0.8" fill="#b0b0b0"/><circle cx="11" cy="13" r="0.8" fill="#b0b0b0"/><circle cx="14" cy="12" r="0.8" fill="#b0b0b0"/><circle cx="4" cy="21" r="0.7" fill="#888"/><circle cx="6" cy="19" r="0.7" fill="#888"/><circle cx="9" cy="18" r="0.7" fill="#888"/><circle cx="12" cy="17" r="0.7" fill="#888"/></svg>
<svg style="left:1062px;top:519px;" width="30" height="23" viewBox="0 0 30 23"><path d="M1 15 L14 8 L27 15 L14 22z" fill="#313136"/><path d="M9 6 L20 2 L20 13 L9 17z" fill="#7e7e84"/></svg>
<svg style="left:1102px;top:519px;" width="30" height="23" viewBox="0 0 30 23"><path d="M1 15 L14 8 L27 15 L14 22z" fill="#313136"/><path d="M8 1 L3 11 h9z" fill="#7e7e84"/><path d="M16 3 l6-2 4 2 v6 l-6 2 -4-2z" fill="#6e6e74"/><circle cx="12" cy="13" r="4.8" fill="#8e8e94"/></svg>
<svg style="left:1142px;top:519px;" width="30" height="23" viewBox="0 0 30 23"><path d="M1 15 L14 8 L27 15 L14 22z" fill="#313136"/><path d="M5 3 h16 v4.5 h-1.2 q-0.4-2.4-2.6-2.4 h-2.2 v10 q0 1 1.6 1 v0.9 h-7.2 v-0.9 q1.6 0 1.6-1 v-10 h-2.2 q-2.2 0-2.6 2.4 h-1.2z" fill="#9e9e9e"/></svg>
<svg style="left:1182px;top:519px;" width="30" height="23" viewBox="0 0 30 23"><path d="M1 15 L14 8 L27 15 L14 22z" fill="#313136"/><circle cx="17" cy="9.5" r="5" fill="#9a9a9e"/><path d="M2 2.5 v6 h6" fill="none" stroke="#a8a8a8" stroke-width="1.2"/><path d="M6 6 l2.5 2.5 -2.5 2.5" fill="none" stroke="#a8a8a8" stroke-width="1.2"/></svg>
<svg style="left:1222px;top:519px;" width="30" height="23" viewBox="0 0 30 23"><path d="M1 15 L14 8 L27 15 L14 22z" fill="#313136"/><rect x="4" y="2" width="14" height="11" rx="1" fill="#555" stroke="#a0a0a0" stroke-width="1.2" transform="rotate(12 11 7)"/><circle cx="19" cy="10" r="4" fill="#444" stroke="#a8a8a8" stroke-width="1.3"/><circle cx="8" cy="6" r="1" fill="#bbb"/></svg>
<svg style="left:1262px;top:519px;" width="30" height="23" viewBox="0 0 30 23"><path d="M1 15 L14 8 L27 15 L14 22z" fill="#313136"/><circle cx="7" cy="6" r="3.5" fill="#8a8a8e"/><circle cx="13" cy="9" r="5.5" fill="#444" stroke="#a8a8a8" stroke-width="1.5"/><path d="M20 5 l3-1 M21 10 h3 M19 14 l2.5 2" stroke="#8a8a8a" stroke-width="1"/></svg>
<svg style="left:1302px;top:519px;" width="30" height="23" viewBox="0 0 30 23"><path d="M1 15 L14 8 L27 15 L14 22z" fill="#313136"/><path d="M6 12 a8 8 0 0 1 16 0z" fill="#a8a8ac"/><path d="M6 12 a8 8 0 0 0 16 0z" fill="#4a4a4f"/><path d="M2 5 v-3.5 h3.5 M26 5 v-3.5 h-3.5 M26 13 v3.5 h-3.5" fill="none" stroke="#9a9a9a" stroke-width="1"/></svg>
<div style="left:327px;top:515px;width:1px;height:30px;background:#44474e;"></div>
<div style="left:498px;top:515px;width:1px;height:30px;background:#44474e;"></div>
<div style="left:709px;top:515px;width:1px;height:30px;background:#44474e;"></div>
<div style="left:920px;top:515px;width:1px;height:30px;background:#44474e;"></div>
<div style="left:1051px;top:515px;width:1px;height:30px;background:#44474e;"></div>
<div style="left:1px;top:555px;width:1497px;height:24px;background:#232328;"></div>
<div style="left:1px;top:579px;width:1497px;height:1px;background:#0f0f11;"></div>
<span class="t" style="left:8.22px;transform:scaleX(0.9579);top:560.95px;font-size:13px;line-height:13px;color:#f2f2f2;font-weight:700;white-space:nowrap;">Nodes</span>
<div style="left:1461px;top:555px;width:1px;height:24px;background:#0f0f11;"></div>
<div style="left:1471.0px;top:565.5px;width:4px;height:4px;border-radius:50%;background:#9a9a9a"></div>
<div style="left:1478.2px;top:565.5px;width:4px;height:4px;border-radius:50%;background:#9a9a9a"></div>
<div style="left:1485.4px;top:565.5px;width:4px;height:4px;border-radius:50%;background:#9a9a9a"></div>
<div style="left:1px;top:580px;width:1497px;height:380px;background:#28282e;"></div>
<div style="left:50px;top:580px;width:1px;height:380px;background:#222227;"></div>
<div style="left:133px;top:580px;width:1px;height:380px;background:#222227;"></div>
<div style="left:215px;top:580px;width:1px;height:380px;background:#222227;"></div>
<div style="left:298px;top:580px;width:1px;height:380px;background:#222227;"></div>
<div style="left:380px;top:580px;width:1px;height:380px;background:#222227;"></div>
<div style="left:463px;top:580px;width:1px;height:380px;background:#222227;"></div>
<div style="left:545px;top:580px;width:1px;height:380px;background:#222227;"></div>
<div style="left:628px;top:580px;width:1px;height:380px;background:#222227;"></div>
<div style="left:710px;top:580px;width:1px;height:380px;background:#222227;"></div>
<div style="left:793px;top:580px;width:1px;height:380px;background:#222227;"></div>
<div style="left:875px;top:580px;width:1px;height:380px;background:#222227;"></div>
<div style="left:958px;top:580px;width:1px;height:380px;background:#222227;"></div>
<div style="left:1040px;top:580px;width:1px;height:380px;background:#222227;"></div>
<div style="left:1123px;top:580px;width:1px;height:380px;background:#222227;"></div>
<div style="left:1205px;top:580px;width:1px;height:380px;background:#222227;"></div>
<div style="left:1288px;top:580px;width:1px;height:380px;background:#222227;"></div>
<div style="left:1370px;top:580px;width:1px;height:380px;background:#222227;"></div>
<div style="left:1453px;top:580px;width:1px;height:380px;background:#222227;"></div>
<div style="left:1px;top:587px;width:1497px;height:1px;background:#222227;"></div>
<div style="left:1px;top:642px;width:1497px;height:1px;background:#222227;"></div>
<div style="left:1px;top:696px;width:1497px;height:1px;background:#222227;"></div>
<div style="left:1px;top:751px;width:1497px;height:1px;background:#222227;"></div>
<div style="left:1px;top:805px;width:1497px;height:1px;background:#222227;"></div>
<div style="left:1px;top:860px;width:1497px;height:1px;background:#222227;"></div>
<div style="left:1px;top:914px;width:1497px;height:1px;background:#222227;"></div>
<div style="left:0px;top:960px;width:1498px;height:1px;background:#0f0f11;"></div>
<div style="left:290px;top:818px;width:1px;height:59px;background:#dcdcdc;"></div>
<div style="left:363px;top:899px;width:18px;height:1px;background:#dcdcdc;"></div>
<div style="left:528px;top:899px;width:51px;height:1px;background:#dcdcdc;"></div>
<div style="left:648px;top:843px;width:1px;height:34px;background:#dcdcdc;"></div>
<div style="left:721px;top:899px;width:23px;height:1px;background:#dcdcdc;"></div>
<div style="left:813px;top:699px;width:1px;height:23px;background:#dcdcdc;"></div>
<div style="left:813px;top:767px;width:1px;height:10px;background:#dcdcdc;"></div>
<div style="left:813px;top:823px;width:1px;height:54px;background:#dcdcdc;"></div>
<div style="left:886px;top:899px;width:38px;height:1px;background:#dcdcdc;"></div>
<div style="left:993px;top:701px;width:1px;height:25px;background:#dcdcdc;"></div>
<div style="left:991.75px;top:771px;width:2.5px;height:11px;background:#e8b020;"></div>
<div style="left:991.75px;top:826px;width:2.5px;height:51px;background:#8cc814;"></div>
<svg style="left:1066px;top:894px;" width="84" height="8" viewBox="0 0 84 8"><line x1="0" y1="5.6" x2="82" y2="3.4" stroke="#dcdcdc" stroke-width="1.3"/></svg>
<div style="left:238.5px;top:786px;width:104.0px;height:22px;border-radius:4px;background:#2e2f35;border:1px solid #131316;box-shadow:0 2px 3px rgba(0,0,0,0.45);overflow:hidden"><div style="left:0;right:0;bottom:0;height:3.5px;background:#b47a10;border-top:1px solid #141417"></div></div>
<span class="t" style="left:242.28px;transform:scaleX(0.9336);top:789.10px;font-size:12px;line-height:12px;color:#e4e4e4;font-weight:400;white-space:nowrap;">Ellipse1</span>
<svg style="left:327.5px;top:790.5px;" width="11" height="11" viewBox="0 0 11 11"><path d="M5.5 1 L10 5.5 L5.5 10 L1 5.5z" fill="none" stroke="#f0f0f0" stroke-width="1.3"/><path d="M5.5 1 L1 5.5 L5.5 10z" fill="#f0f0f0"/></svg>
<svg style="left:227.3px;top:790.5px;" width="11.8" height="13.5" viewBox="0 0 11.8 13.5"><polygon points="1,1 10.35,6.5 1,12" fill="#29b0f0" stroke="#101012" stroke-width="1" stroke-linejoin="round"/></svg>
<div style="left:286.0px;top:809.0px;width:9px;height:9px;background:#ffffff;border:1px solid #101012"></div>
<svg style="left:284.0px;top:874.8px;" width="13.5" height="11.8" viewBox="0 0 13.5 11.8"><polygon points="1,1 12,1 6.5,10.35" fill="#29b0f0" stroke="#101012" stroke-width="1" stroke-linejoin="round"/></svg>
<div style="left:224.5px;top:886px;width:129.0px;height:27px;border-radius:4px;background:#2e2f35;border:1px solid #131316;box-shadow:0 2px 3px rgba(0,0,0,0.45);overflow:hidden"><div style="left:0;right:0;bottom:0;height:3.5px;background:#6fb01e;border-top:1px solid #141417"></div></div>
<span class="t" style="left:254.84px;transform:scaleX(0.9825);top:892.57px;font-size:11.8px;line-height:11.8px;color:#e4e4e4;font-weight:400;white-space:nowrap;">Background1</span>
<div style="left:355.0px;top:895.0px;width:9px;height:9px;background:#ffffff;border:1px solid #101012"></div>
<svg style="left:378.8px;top:893.0px;" width="11.8" height="13.5" viewBox="0 0 11.8 13.5"><polygon points="1,1 10.35,6.5 1,12" fill="#f2c416" stroke="#101012" stroke-width="1" stroke-linejoin="round"/></svg>
<div style="left:389.5px;top:886px;width:129.0px;height:27px;border-radius:4px;background:#2e2f35;border:1px solid #131316;box-shadow:0 2px 3px rgba(0,0,0,0.45);overflow:hidden"><div style="left:0;right:0;bottom:0;height:3.5px;background:#f0a030;border-top:1px solid #141417"></div></div>
<span class="t" style="left:426.78px;top:892.57px;font-size:11.8px;line-height:11.8px;color:#e4e4e4;font-weight:400;white-space:nowrap;">SoftGlow1</span>
<svg style="left:449.0px;top:874.8px;" width="13.5" height="11.8" viewBox="0 0 13.5 11.8"><polygon points="1,1 12,1 6.5,10.35" fill="#29b0f0" stroke="#101012" stroke-width="1" stroke-linejoin="round"/></svg>
<svg style="left:449.0px;top:912.8px;" width="13.5" height="11.8" viewBox="0 0 13.5 11.8"><polygon points="1,10.35 12,10.35 6.5,1" fill="#f0f0f0" stroke="#101012" stroke-width="1" stroke-linejoin="round"/></svg>
<div style="left:519.5px;top:895.0px;width:9px;height:9px;background:#ffffff;border:1px solid #101012"></div>
<svg style="left:573.8px;top:893.0px;" width="11.8" height="13.5" viewBox="0 0 11.8 13.5"><polygon points="1,1 10.35,6.5 1,12" fill="#f2c416" stroke="#101012" stroke-width="1" stroke-linejoin="round"/></svg>
<div style="left:583.5px;top:807px;width:128.0px;height:26px;border-radius:4px;background:#2e2f35;border:1px solid #131316;box-shadow:0 2px 3px rgba(0,0,0,0.45);overflow:hidden"><div style="left:0;right:0;bottom:0;height:3.5px;background:#6fb01e;border-top:1px solid #141417"></div></div>
<span class="t" style="left:586.28px;transform:scaleX(0.9844);top:812.60px;font-size:12px;line-height:12px;color:#e4e4e4;font-weight:400;white-space:nowrap;">Text1</span>
<svg style="left:696.5px;top:813.5px;" width="11" height="11" viewBox="0 0 11 11"><path d="M5.5 1 L10 5.5 L5.5 10 L1 5.5z" fill="none" stroke="#f0f0f0" stroke-width="1.3"/><path d="M5.5 1 L1 5.5 L5.5 10z" fill="#f0f0f0"/></svg>
<svg style="left:571.3px;top:813.5px;" width="11.8" height="13.5" viewBox="0 0 11.8 13.5"><polygon points="1,1 10.35,6.5 1,12" fill="#29b0f0" stroke="#101012" stroke-width="1" stroke-linejoin="round"/></svg>
<div style="left:644.0px;top:835.0px;width:9px;height:9px;background:#ffffff;border:1px solid #101012"></div>
<svg style="left:642.0px;top:874.8px;" width="13.5" height="11.8" viewBox="0 0 13.5 11.8"><polygon points="1,1 12,1 6.5,10.35" fill="#86c215" stroke="#101012" stroke-width="1" stroke-linejoin="round"/></svg>
<div style="left:583.5px;top:886px;width:128.0px;height:27px;border-radius:4px;background:#2e2f35;border:1px solid #131316;box-shadow:0 2px 3px rgba(0,0,0,0.45);overflow:hidden"><div style="left:0;right:0;bottom:0;height:3.5px;background:#a8a8a8;border-top:1px solid #141417"></div></div>
<span class="t" style="left:627.50px;top:892.57px;font-size:11.8px;line-height:11.8px;color:#e4e4e4;font-weight:400;white-space:nowrap;">Merge1</span>
<svg style="left:642.0px;top:912.8px;" width="13.5" height="11.8" viewBox="0 0 13.5 11.8"><polygon points="1,10.35 12,10.35 6.5,1" fill="#29b0f0" stroke="#101012" stroke-width="1" stroke-linejoin="round"/></svg>
<div style="left:712.5px;top:895.0px;width:9px;height:9px;background:#ffffff;border:1px solid #101012"></div>
<svg style="left:738.8px;top:893.0px;" width="11.8" height="13.5" viewBox="0 0 11.8 13.5"><polygon points="1,1 10.35,6.5 1,12" fill="#f2c416" stroke="#101012" stroke-width="1" stroke-linejoin="round"/></svg>
<div style="left:760.5px;top:668px;width:105.0px;height:22px;border-radius:4px;background:#2e2f35;border:1px solid #131316;box-shadow:0 2px 3px rgba(0,0,0,0.45);overflow:hidden"><div style="left:0;right:0;bottom:0;height:3.5px;background:#b47a10;border-top:1px solid #141417"></div></div>
<span class="t" style="left:764.28px;transform:scaleX(0.9262);top:671.10px;font-size:12px;line-height:12px;color:#e4e4e4;font-weight:400;white-space:nowrap;">Rectangle1</span>
<svg style="left:850.5px;top:672.5px;" width="11" height="11" viewBox="0 0 11 11"><path d="M5.5 1 L10 5.5 L5.5 10 L1 5.5z" fill="none" stroke="#f0f0f0" stroke-width="1.3"/><path d="M5.5 1 L1 5.5 L5.5 10z" fill="#f0f0f0"/></svg>
<svg style="left:749.3px;top:672.5px;" width="11.8" height="13.5" viewBox="0 0 11.8 13.5"><polygon points="1,1 10.35,6.5 1,12" fill="#29b0f0" stroke="#101012" stroke-width="1" stroke-linejoin="round"/></svg>
<div style="left:809.0px;top:691.0px;width:9px;height:9px;background:#ffffff;border:1px solid #101012"></div>
<svg style="left:807.0px;top:719.8px;" width="13.5" height="11.8" viewBox="0 0 13.5 11.8"><polygon points="1,1 12,1 6.5,10.35" fill="#29b0f0" stroke="#101012" stroke-width="1" stroke-linejoin="round"/></svg>
<div style="left:748.5px;top:731px;width:128.0px;height:27px;border-radius:4px;background:#2e2f35;border:1px solid #131316;box-shadow:0 2px 3px rgba(0,0,0,0.45);overflow:hidden"><div style="left:0;right:0;bottom:0;height:3.5px;background:#6fb01e;border-top:1px solid #141417"></div></div>
<span class="t" style="left:777.94px;transform:scaleX(0.9940);top:737.57px;font-size:11.8px;line-height:11.8px;color:#e4e4e4;font-weight:400;white-space:nowrap;">Background2</span>
<div style="left:809.0px;top:759.0px;width:9px;height:9px;background:#ffffff;border:1px solid #101012"></div>
<svg style="left:807.0px;top:774.8px;" width="13.5" height="11.8" viewBox="0 0 13.5 11.8"><polygon points="1,1 12,1 6.5,10.35" fill="#f2c416" stroke="#101012" stroke-width="1" stroke-linejoin="round"/></svg>
<div style="left:748.5px;top:786px;width:128.0px;height:27px;border-radius:4px;background:#2e2f35;border:1px solid #131316;box-shadow:0 2px 3px rgba(0,0,0,0.45);overflow:hidden"><div style="left:0;right:0;bottom:0;height:3.5px;background:#f0a030;border-top:1px solid #141417"></div></div>
<span class="t" style="left:785.28px;top:792.57px;font-size:11.8px;line-height:11.8px;color:#e4e4e4;font-weight:400;white-space:nowrap;">SoftGlow2</span>
<svg style="left:737.3px;top:793.0px;" width="11.8" height="13.5" viewBox="0 0 11.8 13.5"><polygon points="1,1 10.35,6.5 1,12" fill="#29b0f0" stroke="#101012" stroke-width="1" stroke-linejoin="round"/></svg>
<svg style="left:876.3px;top:793.0px;" width="11.8" height="13.5" viewBox="0 0 11.8 13.5"><polygon points="10.35,1 1,6.5 10.35,12" fill="#f0f0f0" stroke="#101012" stroke-width="1" stroke-linejoin="round"/></svg>
<div style="left:809.0px;top:814.5px;width:9px;height:9px;background:#ffffff;border:1px solid #101012"></div>
<svg style="left:807.0px;top:874.8px;" width="13.5" height="11.8" viewBox="0 0 13.5 11.8"><polygon points="1,1 12,1 6.5,10.35" fill="#86c215" stroke="#101012" stroke-width="1" stroke-linejoin="round"/></svg>
<div style="left:748.5px;top:886px;width:128.0px;height:27px;border-radius:4px;background:#2e2f35;border:1px solid #131316;box-shadow:0 2px 3px rgba(0,0,0,0.45);overflow:hidden"><div style="left:0;right:0;bottom:0;height:3.5px;background:#a8a8a8;border-top:1px solid #141417"></div></div>
<span class="t" style="left:792.50px;top:892.57px;font-size:11.8px;line-height:11.8px;color:#e4e4e4;font-weight:400;white-space:nowrap;">Merge2</span>
<svg style="left:807.0px;top:912.8px;" width="13.5" height="11.8" viewBox="0 0 13.5 11.8"><polygon points="1,10.35 12,10.35 6.5,1" fill="#29b0f0" stroke="#101012" stroke-width="1" stroke-linejoin="round"/></svg>
<div style="left:877.5px;top:895.0px;width:9px;height:9px;background:#ffffff;border:1px solid #101012"></div>
<svg style="left:918.8px;top:893.0px;" width="11.8" height="13.5" viewBox="0 0 11.8 13.5"><polygon points="1,1 10.35,6.5 1,12" fill="#f2c416" stroke="#101012" stroke-width="1" stroke-linejoin="round"/></svg>
<div style="left:941.5px;top:673px;width:104.0px;height:21px;border-radius:4px;background:#2e2f35;border:1px solid #131316;box-shadow:0 2px 3px rgba(0,0,0,0.45);overflow:hidden"><div style="left:0;right:0;bottom:0;height:3.5px;background:#b47a10;border-top:1px solid #141417"></div></div>
<span class="t" style="left:945.28px;transform:scaleX(0.9079);top:676.10px;font-size:12px;line-height:12px;color:#e4e4e4;font-weight:400;white-space:nowrap;">Rectangle1_1</span>
<svg style="left:1030.5px;top:677.0px;" width="11" height="11" viewBox="0 0 11 11"><path d="M5.5 1 L10 5.5 L5.5 10 L1 5.5z" fill="none" stroke="#f0f0f0" stroke-width="1.3"/><path d="M5.5 1 L1 5.5 L5.5 10z" fill="#f0f0f0"/></svg>
<svg style="left:929.3px;top:676.5px;" width="11.8" height="13.5" viewBox="0 0 11.8 13.5"><polygon points="1,1 10.35,6.5 1,12" fill="#29b0f0" stroke="#101012" stroke-width="1" stroke-linejoin="round"/></svg>
<div style="left:988.5px;top:695.0px;width:9px;height:9px;background:#ffffff;border:1px solid #101012"></div>
<svg style="left:986.5px;top:724.3px;" width="13.5" height="11.8" viewBox="0 0 13.5 11.8"><polygon points="1,1 12,1 6.5,10.35" fill="#29b0f0" stroke="#101012" stroke-width="1" stroke-linejoin="round"/></svg>
<div style="left:928.5px;top:736px;width:128.0px;height:26px;border-radius:4px;background:#2e2f35;border:1px solid #131316;box-shadow:0 2px 3px rgba(0,0,0,0.45);overflow:hidden"><div style="left:0;right:0;bottom:0;height:3.5px;background:#6fb01e;border-top:1px solid #141417"></div></div>
<span class="t" style="left:951.17px;top:742.57px;font-size:11.8px;line-height:11.8px;color:#e4e4e4;font-weight:400;white-space:nowrap;">Background2_1</span>
<div style="left:988.5px;top:762.5px;width:9px;height:9px;background:#ffffff;border:1px solid #101012"></div>
<div style="left:927px;top:789px;width:131px;height:29px;border-radius:5px;border:1.5px solid #d8483a"></div>
<div style="left:928.5px;top:791px;width:128.0px;height:26px;border-radius:4px;background:#3b3c42;border:1px solid #131316;box-shadow:0 2px 3px rgba(0,0,0,0.45);overflow:hidden"><div style="left:0;right:0;bottom:0;height:3.5px;background:#a8a8a8;border-top:1px solid #141417"></div></div>
<span class="t" style="left:962.56px;top:797.57px;font-size:11.8px;line-height:11.8px;color:#e4e4e4;font-weight:400;white-space:nowrap;">Transform1</span>
<svg style="left:988.0px;top:781.6px;" width="10.5" height="9.3" viewBox="0 0 10.5 9.3"><polygon points="1,1 9,1 5.0,7.8" fill="#f2c416" stroke="#101012" stroke-width="1" stroke-linejoin="round"/></svg>
<svg style="left:916.8px;top:797.0px;" width="11.8" height="13.5" viewBox="0 0 11.8 13.5"><polygon points="1,1 10.35,6.5 1,12" fill="#86c215" stroke="#101012" stroke-width="1" stroke-linejoin="round"/></svg>
<svg style="left:1056.8px;top:797.0px;" width="11.8" height="13.5" viewBox="0 0 11.8 13.5"><polygon points="10.35,1 1,6.5 10.35,12" fill="#29b0f0" stroke="#101012" stroke-width="1" stroke-linejoin="round"/></svg>
<div style="left:988.5px;top:816.0px;width:9px;height:9px;background:#ffffff;border:1px solid #101012"></div>
<svg style="left:986.5px;top:874.8px;" width="13.5" height="11.8" viewBox="0 0 13.5 11.8"><polygon points="1,1 12,1 6.5,10.35" fill="#86c215" stroke="#101012" stroke-width="1" stroke-linejoin="round"/></svg>
<div style="left:928.5px;top:886px;width:128.0px;height:27px;border-radius:4px;background:#2e2f35;border:1px solid #131316;box-shadow:0 2px 3px rgba(0,0,0,0.45);overflow:hidden"><div style="left:0;right:0;bottom:0;height:3.5px;background:#a8a8a8;border-top:1px solid #141417"></div></div>
<span class="t" style="left:972.50px;top:892.57px;font-size:11.8px;line-height:11.8px;color:#e4e4e4;font-weight:400;white-space:nowrap;">Merge3</span>
<svg style="left:986.5px;top:912.8px;" width="13.5" height="11.8" viewBox="0 0 13.5 11.8"><polygon points="1,10.35 12,10.35 6.5,1" fill="#29b0f0" stroke="#101012" stroke-width="1" stroke-linejoin="round"/></svg>
<div style="left:1058.0px;top:895.0px;width:9px;height:9px;background:#ffffff;border:1px solid #101012"></div>
<svg style="left:1143.3px;top:890.8px;" width="11.8" height="13.5" viewBox="0 0 11.8 13.5"><polygon points="1,1 10.35,6.5 1,12" fill="#f2c416" stroke="#101012" stroke-width="1" stroke-linejoin="round"/></svg>
<div style="left:1153.5px;top:884px;width:129.0px;height:27px;border-radius:4px;background:#2e2f35;border:1px solid #131316;box-shadow:0 2px 3px rgba(0,0,0,0.45);overflow:hidden"><div style="left:0;right:0;bottom:0;height:3.5px;background:#6aa4dc;border-top:1px solid #141417"></div></div>
<span class="t" style="left:1189.14px;top:890.57px;font-size:11.8px;line-height:11.8px;color:#e4e4e4;font-weight:400;white-space:nowrap;">MediaOut1</span>
<div style="left:1284px;top:893px;width:9px;height:9px;background:#9a9a9a;border:1px solid #101012"></div>
<div style="left:1161px;top:910px;width:21px;height:11px;border-radius:0 0 4px 4px;background:#2a2a2f;box-shadow:0 1px 2px rgba(0,0,0,0.5)"></div>
<div style="left:1164px;top:913px;width:5px;height:5px;border-radius:50%;background:#0c0c0c"></div>
<div style="left:1173px;top:913px;width:5px;height:5px;border-radius:50%;background:#f0f0f0"></div>
<div style="left:907px;top:781px;width:169px;height:46px;border:3px solid #b4e51e"></div>
<div style="left:1px;top:961px;width:1497px;height:22px;background:#1f1f23;"></div>
<div style="left:1498px;top:961px;width:422px;height:22px;background:#1f1f23;"></div>
<div style="left:0px;top:983px;width:1920px;height:1px;background:#0f0f11;"></div>
<span class="t" style="left:11.42px;transform:scaleX(0.9928);top:964.95px;font-size:13px;line-height:13px;color:#8e8e8e;font-weight:400;white-space:nowrap;">[Transform1.cropL]</span>
<span class="t" style="left:1253.22px;transform:scaleX(0.9572);top:964.95px;font-size:13px;line-height:13px;color:#8e8e8e;font-weight:400;white-space:nowrap;">Playback: 23 frames/sec</span>
<span class="t" style="left:1835.22px;transform:scaleX(0.9212);top:964.95px;font-size:13px;line-height:13px;color:#8e8e8e;font-weight:400;white-space:nowrap;">3% -&nbsp; 254 MB</span>
<div style="left:0px;top:984px;width:1920px;height:48px;background:#19191c;"></div>
<svg style="left:45px;top:999px;" width="20" height="19" viewBox="0 0 20 19"><path d="M10 10 L6.6 6.4 A3.9 3.9 0 1 1 13.4 6.4z" fill="#f0f0f0"/><circle cx="10" cy="4.6" r="3.9" fill="#f0f0f0"/><circle cx="4.4" cy="14" r="3.9" fill="#f0f0f0"/><circle cx="15.6" cy="14" r="3.9" fill="#f0f0f0"/><path d="M10 10.5 L4.6 10.2 L8.2 15.5z M10 10.5 L15.4 10.2 L11.8 15.5z" fill="#f0f0f0"/></svg>
<span class="t" style="left:72.02px;transform:scaleX(0.9787);top:1002.95px;font-size:13px;line-height:13px;color:#ececec;font-weight:700;white-space:nowrap;letter-spacing:0.3px;">DaVinci Resolve 20</span>
<div style="left:901px;top:984px;width:118px;height:48px;background:#000000;"></div>
<div style="left:901px;top:1029px;width:118px;height:3px;background:#e8463c;"></div>
<span class="t" style="left:580.41px;transform:scaleX(1.0273);top:1012.40px;font-size:14px;line-height:14px;color:#8e8e92;font-weight:400;white-space:nowrap;">Media</span>
<span class="t" style="left:708.86px;transform:scaleX(1.0222);top:1012.40px;font-size:14px;line-height:14px;color:#8e8e92;font-weight:400;white-space:nowrap;">Cut</span>
<span class="t" style="left:827.46px;transform:scaleX(1.0396);top:1012.40px;font-size:14px;line-height:14px;color:#8e8e92;font-weight:400;white-space:nowrap;">Edit</span>
<span class="t" style="left:938.76px;transform:scaleX(0.9257);top:1012.40px;font-size:14px;line-height:14px;color:#f4f4f4;font-weight:700;white-space:nowrap;">Fusion</span>
<span class="t" style="left:1062.76px;transform:scaleX(1.0302);top:1012.40px;font-size:14px;line-height:14px;color:#8e8e92;font-weight:400;white-space:nowrap;">Color</span>
<span class="t" style="left:1174.76px;transform:scaleX(1.0137);top:1012.40px;font-size:14px;line-height:14px;color:#8e8e92;font-weight:400;white-space:nowrap;">Fairlight</span>
<span class="t" style="left:1298.51px;transform:scaleX(0.9863);top:1012.40px;font-size:14px;line-height:14px;color:#8e8e92;font-weight:400;white-space:nowrap;">Deliver</span>
<svg style="left:590px;top:990px;" width="22" height="20" viewBox="0 0 22 20"><path d="M3.5 2.3 h14 M2.5 3.9 h16" stroke="#747478" stroke-width="0.9"/><rect x="2.5" y="5.3" width="17" height="12.6" rx="1.5" fill="none" stroke="#747478" stroke-width="1.3"/><circle cx="6.5" cy="8.8" r="1.2" fill="#747478"/><path d="M4.5 15.5 l4-4.5 3 3 2.5-2.5 3.5 4" fill="none" stroke="#747478" stroke-width="1"/></svg>
<svg style="left:707px;top:990px;" width="27" height="19" viewBox="0 0 27 19"><path d="M1 11.3 h5.5 M2.8 8.5 h4.5 M2 14.2 h5" stroke="#747478" stroke-width="1.1"/><path d="M9.5 3.7 h15 q1.3 0 1.1 1.3 l-1.6 9.8 q-0.2 1.2 -1.4 1.2 h-15 l2-12.3z" fill="none" stroke="#747478" stroke-width="1.3"/><path d="M16.5 0.8 L13.5 18.5" stroke="#747478" stroke-width="1.1"/><circle cx="20" cy="6.3" r="0.8" fill="#747478"/><circle cx="22" cy="6.3" r="0.8" fill="#747478"/><circle cx="19" cy="13.3" r="0.8" fill="#747478"/><circle cx="21" cy="13.3" r="0.8" fill="#747478"/></svg>
<svg style="left:829px;top:989px;" width="25" height="21" viewBox="0 0 25 21"><path d="M12.4 3 V20" stroke="#747478" stroke-width="1.2"/><circle cx="12.4" cy="2.5" r="1.3" fill="none" stroke="#747478" stroke-width="0.9"/><path d="M2.5 6.5 h7.5 M15 6.5 h7.5 M5 10.5 h5 M15 10.5 h6.5 M2.5 14.5 h7.5 M15 14.5 h8" stroke="#747478" stroke-width="2.6" stroke-linecap="round"/></svg>
<svg style="left:947px;top:988px;" width="26" height="23" viewBox="0 0 26 23"><path d="M4 19 q-2-5 3-9 q-1 4 2 6z" fill="#3a4a1a" opacity="0.8"/><path d="M15.5 18.5 L23 6.5" stroke="#0a0a0a" stroke-width="3.6" stroke-linecap="round"/><path d="M15.5 18.5 L23 6.5" stroke="#c8c8c8" stroke-width="2.2" stroke-linecap="round"/><path d="M9 1.7000000000000002 Q9.56 3.94 11.8 4.5 Q9.56 5.06 9 7.3 Q8.44 5.06 6.2 4.5 Q8.44 3.94 9 1.7000000000000002z" fill="#e8d830"/><path d="M16.5 0.2999999999999998 Q16.94 2.06 18.7 2.5 Q16.94 2.94 16.5 4.7 Q16.06 2.94 14.3 2.5 Q16.06 2.06 16.5 0.2999999999999998z" fill="#e8d830"/><path d="M12 7.8 Q12.44 9.56 14.2 10 Q12.44 10.44 12 12.2 Q11.56 10.44 9.8 10 Q11.56 9.56 12 7.8z" fill="#e8d830"/></svg>
<svg style="left:1069px;top:989px;" width="22" height="20" viewBox="0 0 22 20"><circle cx="18.2" cy="7.8" r="1.6" fill="#747478" fill-opacity="0.5"/><circle cx="17.6" cy="13.5" r="1.6" fill="#747478" fill-opacity="0.56"/><circle cx="13.2" cy="17.2" r="1.6" fill="#747478" fill-opacity="0.62"/><circle cx="7.5" cy="16.6" r="1.6" fill="#747478" fill-opacity="0.6799999999999999"/><circle cx="3.8" cy="12.2" r="1.6" fill="#747478" fill-opacity="0.74"/><circle cx="4.4" cy="6.5" r="1.6" fill="#747478" fill-opacity="0.8"/><circle cx="8.8" cy="2.8" r="1.6" fill="#747478" fill-opacity="0.86"/><circle cx="14.5" cy="3.4" r="1.6" fill="#747478" fill-opacity="0.9199999999999999"/><circle cx="11" cy="10" r="1.6" fill="#747478"/></svg>
<svg style="left:1191px;top:990px;" width="18" height="18" viewBox="0 0 18 18"><path d="M6 4 L16 2 V13" fill="none" stroke="#747478" stroke-width="2"/><path d="M6 4 V15" stroke="#747478" stroke-width="2"/><ellipse cx="4" cy="15" rx="3" ry="2.3" fill="#747478"/><ellipse cx="14" cy="13" rx="3" ry="2.3" fill="#747478"/></svg>
<svg style="left:1309px;top:989px;" width="22" height="21" viewBox="0 0 22 21"><path d="M19 2 q-9 1 -12 9 l4 4 q8 -3 8 -13z" fill="none" stroke="#747478" stroke-width="1.3"/><circle cx="14" cy="7" r="1.8" fill="none" stroke="#747478" stroke-width="1.2"/><path d="M7 11 l-4 0 3-4 h4 M11 15 v4 l4-3 v-4 M6 15 l-3 4" fill="none" stroke="#747478" stroke-width="1.2"/></svg>
<svg style="left:1828px;top:1001px;" width="17" height="16" viewBox="0 0 17 16"><path d="M8.5 1 L1 8 h2.5 v7 h4 v-4.5 h2 v4.5 h4 v-7 h2.5z" fill="#a8a8ac"/></svg>
<svg style="left:1876px;top:999px;" width="19" height="19" viewBox="0 0 19 19"><path d="M18.0 9.5 L14.5 9.5 M15.5 15.5 L13.0 13.0 M9.5 18.0 L9.5 14.5 M3.5 15.5 L6.0 13.0 M1.0 9.5 L4.5 9.5 M3.5 3.5 L6.0 6.0 M9.5 1.0 L9.5 4.5 M15.5 3.5 L13.0 6.0" stroke="#a8a8ac" stroke-width="3"/><circle cx="9.5" cy="9.5" r="5.5" fill="none" stroke="#a8a8ac" stroke-width="3"/></svg>
<div style="left:0px;top:1032px;width:1920px;height:48px;background:#dadada;"></div>
<svg style="left:21px;top:1045px;" width="23" height="23" viewBox="0 0 23 23"><defs><linearGradient id="wg" x1="0" y1="0" x2="1" y2="1"><stop offset="0" stop-color="#4cc2ff"/><stop offset="1" stop-color="#0a78d4"/></linearGradient></defs><rect x="0" y="0" width="10.8" height="10.8" rx="0.8" fill="url(#wg)"/><rect x="12.2" y="0" width="10.8" height="10.8" rx="0.8" fill="url(#wg)"/><rect x="0" y="12.2" width="10.8" height="10.8" rx="0.8" fill="url(#wg)"/><rect x="12.2" y="12.2" width="10.8" height="10.8" rx="0.8" fill="url(#wg)"/></svg>
<svg style="left:65px;top:1044px;" width="24" height="25" viewBox="0 0 24 25"><defs><linearGradient id="sg" x1="0" y1="0" x2="1" y2="1"><stop offset="0" stop-color="#30c080"/><stop offset="0.5" stop-color="#1a80d8"/><stop offset="1" stop-color="#1a60c8"/></linearGradient></defs><circle cx="10.5" cy="10.5" r="7.6" fill="none" stroke="url(#sg)" stroke-width="2.4"/><path d="M16 16 L21.5 21.5" stroke="#1a68d0" stroke-width="2.6" stroke-linecap="round"/></svg>
<svg style="left:108px;top:1045px;" width="25" height="23" viewBox="0 0 25 23"><defs><linearGradient id="tg" x1="0" y1="0" x2="1" y2="1"><stop offset="0" stop-color="#ffffff"/><stop offset="1" stop-color="#9a9a9a"/></linearGradient></defs><rect x="1" y="7" width="15" height="14.5" rx="1" fill="#1a1a1a"/><rect x="7.2" y="1" width="15.5" height="15.5" rx="1" fill="url(#tg)" opacity="0.95"/></svg>
<svg style="left:152px;top:1044px;" width="26" height="25" viewBox="0 0 26 25"><defs><linearGradient id="cp1" x1="0" y1="1" x2="1" y2="0"><stop offset="0" stop-color="#f8c020"/><stop offset="0.45" stop-color="#40c070"/><stop offset="1" stop-color="#2a8af0"/></linearGradient><linearGradient id="cp2" x1="0" y1="1" x2="1" y2="0"><stop offset="0" stop-color="#f05a30"/><stop offset="0.5" stop-color="#e050b0"/><stop offset="1" stop-color="#8a5af0"/></linearGradient></defs><path d="M9 2 h7 q2 0 1.5 2 l-5.5 17 q-0.7 2 -3 2 h-4 q-4 0 -4-4 q0-7 4-13 q2-4 4-4z" fill="url(#cp1)"/><path d="M17 23 h-7 q-2 0 -1.5-2 l5.5-17 q0.7-2 3-2 h4 q4 0 4 4 q0 7 -4 13 q-2 4 -4 4z" fill="url(#cp2)"/></svg>
<svg style="left:197px;top:1045px;" width="25" height="23" viewBox="0 0 25 23"><path d="M1 1.5 h8.5 l2 2.5 h12.5 v17 h-23z" fill="#d8a010"/><rect x="1" y="6" width="23" height="15" rx="1" fill="#f6c840"/><rect x="6.5" y="14.5" width="12" height="6.5" rx="1.5" fill="#2a7ad8"/></svg>
<svg style="left:241px;top:1044px;" width="24" height="24" viewBox="0 0 24 24"><path d="M7 6 V3.5 a1.5 1.5 0 0 1 1.5-1.5 h7 a1.5 1.5 0 0 1 1.5 1.5 V6" fill="none" stroke="#38b8f0" stroke-width="1.6"/><rect x="1" y="5.5" width="22" height="18" rx="2.5" fill="#1a4f98"/><rect x="7.5" y="9.5" width="4" height="4" fill="#f25022"/><rect x="12.5" y="9.5" width="4" height="4" fill="#7fba00"/><rect x="7.5" y="14.5" width="4" height="4" fill="#00a4ef"/><rect x="12.5" y="14.5" width="4" height="4" fill="#ffb900"/></svg>
<svg style="left:284px;top:1044px;" width="26" height="26" viewBox="0 0 26 26"><circle cx="13" cy="13" r="12" fill="#db4437"/><path d="M13 13 L23.4 7 A12 12 0 0 1 13 25z" fill="#f4c20d"/><path d="M13 13 L13 25 A12 12 0 0 1 2.6 7z" fill="#0f9d58"/><path d="M13 13 L2.6 7 A12 12 0 0 1 23.4 7z" fill="#db4437"/><circle cx="13" cy="13" r="5.6" fill="#fff"/><circle cx="13" cy="13" r="4.4" fill="#4285f4"/></svg>
<svg style="left:328px;top:1044px;" width="26" height="26" viewBox="0 0 26 26"><path d="M13 1 l6 6 -6 6 -6 -6z" fill="#f07050"/><path d="M1 13 l6 -6 6 6 -6 6z" fill="#6aa8f0"/><path d="M25 13 l-6 -6 -6 6 6 6z" fill="#60c060"/><path d="M13 25 l6 -6 -6 -6 -6 6z" fill="#f0d040"/></svg>
<svg style="left:372px;top:1044px;" width="26" height="26" viewBox="0 0 26 26"><defs><linearGradient id="eg" x1="1" y1="0" x2="0" y2="1"><stop offset="0" stop-color="#5ad47a"/><stop offset="0.4" stop-color="#2aa8d8"/><stop offset="1" stop-color="#0c59a4"/></linearGradient></defs><circle cx="13" cy="13" r="12" fill="url(#eg)"/><path d="M5 15 q1-8 8.5-8 q6 0 7.5 5.5 q0 3 -4 3 h-7 q0.5 4 5.5 5 q-5 3 -9-0.5 q-1.5-2 -1.5-5z" fill="#e0f4ff" opacity="0.35"/><path d="M9.5 13.5 q2-3.5 5-2.5 q2 1 1 2.5z" fill="#dadada"/></svg>
<svg style="left:417px;top:1044px;" width="25" height="25" viewBox="0 0 25 25"><path d="M18 1 L24 4 V21 L18 24 L7 14 L3 17 L1 16 V9 L3 8 L7 11z" fill="#2a9af0"/><path d="M18 7 V18 L11 12.5z" fill="#dadada"/><path d="M18 1 L24 4 V21 L18 24z" fill="#1a7ad8"/><path d="M1 9 L3 8 L18 20 V24 L1 10z" fill="#0a68c0" opacity="0.6"/></svg>
<svg style="left:460px;top:1044px;" width="25" height="25" viewBox="0 0 25 25"><rect x="1" y="4" width="23" height="20" rx="2" fill="#1c6fc8"/><path d="M2 4 l20-3 1 4 -20 3z" fill="#3a9ae8"/><path d="M9 10 v10 l8-5z" fill="#fff"/></svg>
<div style="left:498px;top:1037px;width:38px;height:38px;border-radius:4px;background:#f4f4f4;border:1px solid #e6e6e6"></div>
<svg style="left:506px;top:1045px;" width="22" height="22" viewBox="0 0 22 22"><rect x="1" y="1" width="20" height="20" rx="5" fill="#1e2636" stroke="#d0a040" stroke-width="0.8" stroke-opacity="0.6"/><path d="M11 4 q2 2 1.5 4 q-1.5 1.5 -3 0 q-0.5-2 1.5-4z" fill="#3ec8f0"/><circle cx="7.8" cy="13.2" r="2.6" fill="#e8e040"/><circle cx="14.2" cy="13.2" r="2.6" fill="#f05050"/><circle cx="11" cy="9" r="1.5" fill="#60d8ff"/></svg>
<div style="left:509px;top:1071px;width:16px;height:3px;background:#1a6fd0;border-radius:2px;"></div>
<svg style="left:552px;top:1044px;" width="20" height="26" viewBox="0 0 20 26"><rect x="1" y="4" width="18" height="20" rx="1.5" fill="#58c0e8"/><path d="M4.5 9.5 h11 M4.5 13 h11 M4.5 16.5 h11" stroke="#1a6a98" stroke-width="1.6"/><path d="M4.5 1.5 v4 M8.2 1.5 v4 M11.8 1.5 v4 M15.5 1.5 v4" stroke="#1a4a70" stroke-width="1.4"/><rect x="1" y="22" width="18" height="2.5" fill="#8a3a10"/></svg>
<svg style="left:593px;top:1044px;" width="24" height="25" viewBox="0 0 24 25"><defs><linearGradient id="pg" x1="0" y1="0" x2="1" y2="1"><stop offset="0" stop-color="#3aa0f0"/><stop offset="1" stop-color="#5a5ad0"/></linearGradient><linearGradient id="pm" x1="0" y1="0" x2="0" y2="1"><stop offset="0" stop-color="#50d0f8"/><stop offset="1" stop-color="#1a90e0"/></linearGradient></defs><rect x="1" y="1" width="22" height="23" rx="3" fill="url(#pg)"/><path d="M1 22 L11 10 L23 21 V21 q0 3 -3 3 H4 q-3 0 -3-2z" fill="url(#pm)"/><circle cx="17" cy="5.5" r="2" fill="#ffffff"/></svg>
<div style="left:162px;top:1072px;width:6px;height:3px;background:#8a8a8a;border-radius:2px;"></div>
<div style="left:206px;top:1072px;width:6px;height:3px;background:#8a8a8a;border-radius:2px;"></div>
<div style="left:294px;top:1072px;width:6px;height:3px;background:#8a8a8a;border-radius:2px;"></div>
<div style="left:337px;top:1072px;width:6px;height:3px;background:#8a8a8a;border-radius:2px;"></div>
<div style="left:382px;top:1072px;width:6px;height:3px;background:#8a8a8a;border-radius:2px;"></div>
<div style="left:425px;top:1072px;width:6px;height:3px;background:#8a8a8a;border-radius:2px;"></div>
<div style="left:469px;top:1072px;width:6px;height:3px;background:#8a8a8a;border-radius:2px;"></div>
<div style="left:557px;top:1072px;width:6px;height:3px;background:#8a8a8a;border-radius:2px;"></div>
<div style="left:601px;top:1072px;width:6px;height:3px;background:#8a8a8a;border-radius:2px;"></div>
<svg style="left:1576px;top:1051px;" width="12" height="8" viewBox="0 0 12 8"><polyline points="1,7 6,2 11,7" fill="none" stroke="#222" stroke-width="1.4"/></svg>
<svg style="left:1605px;top:1046px;" width="18" height="19" viewBox="0 0 18 19"><path d="M3 9 a6 6 0 0 1 11 -3 M15 10 a6 6 0 0 1 -11 3" fill="none" stroke="#333" stroke-width="1.5"/><path d="M14 2 v4 h-4 M4 17 v-4 h4" fill="none" stroke="#333" stroke-width="1.4"/><circle cx="13" cy="15" r="3.5" fill="#f0a020"/></svg>
<svg style="left:1638px;top:1048px;" width="16" height="14" viewBox="0 0 16 14"><path d="M1 4 h14 M1 10 h14" stroke="#222" stroke-width="1.6"/><rect x="9" y="1.5" width="2.5" height="5" fill="#222"/><rect x="4" y="7.5" width="2.5" height="5" fill="#222"/></svg>
<svg style="left:1669px;top:1047px;" width="17" height="16" viewBox="0 0 17 16"><path d="M1 15 V4 M4 15 V4 L8 11 L12 4 V15 M15 15 V4" stroke="#222" stroke-width="2" fill="none"/><circle cx="13.5" cy="3" r="2.5" fill="#e83a2a"/></svg>
<svg style="left:1703px;top:1046px;" width="14" height="19" viewBox="0 0 14 19"><rect x="4" y="1" width="6" height="11" rx="3" fill="none" stroke="#2a6ad8" stroke-width="1.5"/><path d="M1.5 9 a5.5 5.5 0 0 0 11 0 M7 14.5 v3.5" fill="none" stroke="#2a6ad8" stroke-width="1.5"/></svg>
<svg style="left:1733px;top:1047px;" width="18" height="14" viewBox="0 0 18 14"><path d="M1 5 q8-7 16 0 M3.5 8 q5.5-4.5 11 0 M6 11 q3-2.5 6 0" fill="none" stroke="#222" stroke-width="1.5"/><circle cx="9" cy="12.5" r="1.2" fill="#222"/></svg>
<svg style="left:1757px;top:1047px;" width="17" height="15" viewBox="0 0 17 15"><path d="M1.5 5 h3 l4.5-3.5 v12 l-4.5-3.5 h-3z" fill="none" stroke="#222" stroke-width="1.3"/><path d="M11 5 q1.5 2.5 0 5 M13.5 3 q3 4.5 0 9" fill="none" stroke="#222" stroke-width="1.2"/></svg>
<svg style="left:1782px;top:1046px;" width="17" height="17" viewBox="0 0 17 17"><rect x="1" y="6" width="13" height="8" rx="1" fill="none" stroke="#222" stroke-width="1.4"/><rect x="14.5" y="8.5" width="2" height="3" fill="#222"/><rect x="3" y="8" width="9" height="4" fill="#222"/><path d="M5 1 L3 6 h3 l-2 5" fill="none" stroke="#222" stroke-width="1"/></svg>
<span class="t" style="left:1847.48px;top:1042.30px;font-size:12px;line-height:12px;color:#1a1a1a;font-weight:400;white-space:nowrap;">08.48</span>
<span class="t" style="left:1814.98px;transform:scaleX(1.0396);top:1058.50px;font-size:12px;line-height:12px;color:#1a1a1a;font-weight:400;white-space:nowrap;">13/09/2025</span>
<svg style="left:1884px;top:1045px;" width="17" height="18" viewBox="0 0 17 18"><path d="M3 13 q1-1 1-5 a4.5 4.5 0 0 1 9 0 q0 4 1 5z" fill="#222"/><path d="M7 15 h3" stroke="#222" stroke-width="1.5"/><path d="M10 1 h4 l-4 4 h4" fill="none" stroke="#222" stroke-width="1"/><text x="7" y="11" font-size="6" fill="#e1e1e1" font-family="Liberation Sans">z</text></svg>
<div style="left:1499px;top:66px;width:421px;height:23px;background:#232328;"></div>
<div style="left:1498px;top:89px;width:422px;height:1px;background:#0f0f11;"></div>
<div style="left:1498px;top:66px;width:1px;height:895px;background:#0f0f11;"></div>
<span class="t" style="left:1506.22px;transform:scaleX(0.9615);top:71.45px;font-size:13px;line-height:13px;color:#f0f0f0;font-weight:700;white-space:nowrap;">Inspector</span>
<div style="left:1882px;top:66px;width:1px;height:23px;background:#0f0f11;"></div>
<div style="left:1891.5px;top:75.5px;width:4px;height:4px;border-radius:50%;background:#9a9a9a"></div>
<div style="left:1898.7px;top:75.5px;width:4px;height:4px;border-radius:50%;background:#9a9a9a"></div>
<div style="left:1905.9px;top:75.5px;width:4px;height:4px;border-radius:50%;background:#9a9a9a"></div>
<div style="left:1499px;top:90px;width:421px;height:871px;background:#28282e;"></div>
<div style="left:1509px;top:99px;width:400px;height:22px;border-radius:2px;background:#2c2c32;border:1px solid #1c1c20"></div>
<div style="left:1509px;top:99px;width:200px;height:22px;border-radius:2px 0 0 2px;background:#151518;border:1px solid #101013"></div>
<span class="t" style="left:1595.27px;transform:scaleX(0.8913);top:102.95px;font-size:13px;line-height:13px;color:#f2f2f2;font-weight:400;white-space:nowrap;">Tools</span>
<span class="t" style="left:1781.57px;transform:scaleX(1.0248);top:102.95px;font-size:13px;line-height:13px;color:#55555c;font-weight:400;white-space:nowrap;">Modifiers</span>
<div style="left:1514px;top:137.5px;width:24px;height:14px;border-radius:7px;background:#18181b"></div>
<div style="left:1526.5px;top:140px;width:9px;height:9px;border-radius:50%;background:#e8402f"></div>
<span class="t" style="left:1547.76px;transform:scaleX(0.9946);top:138.10px;font-size:14px;line-height:14px;color:#f2f2f2;font-weight:400;white-space:nowrap;">Transform1</span>
<div style="left:1747px;top:139.5px;width:11px;height:11px;border-radius:50%;background:#a8a8a8;border:1px solid #111"></div>
<svg style="left:1766px;top:142px;" width="11" height="8" viewBox="0 0 11 8"><polyline points="1,1 5.5,6 10,1" fill="none" stroke="#8a8a8a" stroke-width="1.3"/></svg>
<div style="left:1787px;top:135px;width:2px;height:20px;background:#111113;"></div>
<svg style="left:1800px;top:139px;" width="18" height="14" viewBox="0 0 18 14"><rect x="1.5" y="4.5" width="12" height="8" rx="1.5" fill="none" stroke="#8e8e8e" stroke-width="1.2"/><path d="M4 2.5 h10 a1.5 1.5 0 0 1 1.5 1.5 v6" fill="none" stroke="#8e8e8e" stroke-width="1.2"/></svg>
<svg style="left:1829px;top:137px;" width="16" height="16" viewBox="0 0 16 16"><path d="M9 1 l6 6 -2 1 -3 3 -1 3 -6 -6 3 -1 3 -3z" fill="#8e8e8e"/><path d="M6 10 L1 15" stroke="#8e8e8e" stroke-width="1.2"/></svg>
<svg style="left:1858px;top:138px;" width="14" height="15" viewBox="0 0 14 15"><path d="M3.5 7 V4 a3 3 0 0 1 6 0" fill="none" stroke="#8e8e8e" stroke-width="1.2"/><rect x="1" y="7" width="12" height="7" rx="1" fill="none" stroke="#8e8e8e" stroke-width="1.2"/></svg>
<svg style="left:1884px;top:138px;" width="16" height="15" viewBox="0 0 16 15"><path d="M3 4.5 A6.5 6.5 0 1 1 2.5 9" fill="none" stroke="#8e8e8e" stroke-width="1.2"/><path d="M1 2 v4 h4" fill="none" stroke="#8e8e8e" stroke-width="1.2"/><path d="M9.5 4.5 v6 M6.5 7.5 h6" stroke="#8e8e8e" stroke-width="1.1"/></svg>
<div style="left:1499px;top:160px;width:421px;height:1px;background:#151518;"></div>
<div style="left:1499px;top:161px;width:421px;height:52px;background:#222227;"></div>
<div style="left:1499px;top:213px;width:421px;height:1px;background:#131316;"></div>
<div style="left:1649px;top:211px;width:60px;height:2px;background:#e8463c;"></div>
<svg style="left:1666px;top:168px;" width="28" height="21" viewBox="0 0 28 21"><defs><linearGradient id="cg" x1="0" y1="0" x2="1" y2="1"><stop offset="0" stop-color="#2a2a2e"/><stop offset="0.5" stop-color="#4a4a4e"/><stop offset="1" stop-color="#2a2a2e"/></linearGradient></defs><rect x="2.5" y="2.5" width="20" height="15" fill="url(#cg)" stroke="#8e8e8e" stroke-width="1"/><path d="M17.5 18 L24.5 5.6" stroke="#1a1a1d" stroke-width="4.2" stroke-linecap="round"/><path d="M17.5 18 L24.5 5.6" stroke="#f4f4f4" stroke-width="2.6" stroke-linecap="round"/><path d="M9.5 3.8000000000000003 Q10.02 5.880000000000001 12.1 6.4 Q10.02 6.92 9.5 9.0 Q8.98 6.92 6.9 6.4 Q8.98 5.880000000000001 9.5 3.8000000000000003z" fill="#f4f4f4"/><path d="M14.3 8.0 Q14.82 10.08 16.900000000000002 10.6 Q14.82 11.12 14.3 13.2 Q13.780000000000001 11.12 11.700000000000001 10.6 Q13.780000000000001 10.08 14.3 8.0z" fill="#f4f4f4"/><path d="M18.1 1.0 Q18.560000000000002 2.84 20.400000000000002 3.3 Q18.560000000000002 3.76 18.1 5.6 Q17.64 3.76 15.8 3.3 Q17.64 2.84 18.1 1.0z" fill="#f4f4f4"/></svg>
<span class="t" style="left:1656.78px;transform:scaleX(0.9945);top:192.80px;font-size:12px;line-height:12px;color:#f0f0f0;font-weight:400;white-space:nowrap;">Controls</span>
<svg style="left:1726px;top:168px;" width="30" height="21" viewBox="0 0 30 21"><rect x="1.5" y="2.5" width="20" height="15" fill="#36363b" stroke="#8a8a8a" stroke-width="1"/><circle cx="20.5" cy="12.4" r="5.6" fill="#222227"/><rect x="19.3" y="6.3" width="2.4" height="3" fill="#8e8e8e" transform="rotate(0 20.5 12.4)"/><rect x="19.3" y="6.3" width="2.4" height="3" fill="#8e8e8e" transform="rotate(45 20.5 12.4)"/><rect x="19.3" y="6.3" width="2.4" height="3" fill="#8e8e8e" transform="rotate(90 20.5 12.4)"/><rect x="19.3" y="6.3" width="2.4" height="3" fill="#8e8e8e" transform="rotate(135 20.5 12.4)"/><rect x="19.3" y="6.3" width="2.4" height="3" fill="#8e8e8e" transform="rotate(180 20.5 12.4)"/><rect x="19.3" y="6.3" width="2.4" height="3" fill="#8e8e8e" transform="rotate(225 20.5 12.4)"/><rect x="19.3" y="6.3" width="2.4" height="3" fill="#8e8e8e" transform="rotate(270 20.5 12.4)"/><rect x="19.3" y="6.3" width="2.4" height="3" fill="#8e8e8e" transform="rotate(315 20.5 12.4)"/><circle cx="20.5" cy="12.4" r="4" fill="#8e8e8e"/><circle cx="20.5" cy="12.4" r="2" fill="#2a2a2f"/></svg>
<span class="t" style="left:1718.08px;transform:scaleX(0.9673);top:192.80px;font-size:12px;line-height:12px;color:#8e8e8e;font-weight:400;white-space:nowrap;">Settings</span>
<span class="t" style="left:1574.28px;top:225.80px;font-size:12px;line-height:12px;color:#bdbdbd;font-weight:400;white-space:nowrap;">Control Mode</span>
<div style="left:1656px;top:222px;width:203px;height:20px;border-radius:3px;background:#18181b;border:1px solid #0e0e10"></div>
<span class="t" style="left:1663.25px;transform:scaleX(0.9550);top:225.88px;font-size:12.5px;line-height:12.5px;color:#f0f0f0;font-weight:400;white-space:nowrap;">Sliders</span>
<svg style="left:1841px;top:228px;" width="12" height="8" viewBox="0 0 12 8"><polyline points="1,1 6.0,6 11,1" fill="none" stroke="#b0b0b0" stroke-width="1.3"/></svg>
<div style="left:1514px;top:250px;width:390px;height:1px;background:#111113;"></div>
<svg style="left:1518px;top:261px;" width="11" height="8" viewBox="0 0 11 8"><polyline points="1,1 5.5,6 10,1" fill="none" stroke="#b8b8b8" stroke-width="1.5"/></svg>
<span class="t" style="left:1534.62px;transform:scaleX(0.9774);top:259.45px;font-size:13px;line-height:13px;color:#c4c4c4;font-weight:400;white-space:nowrap;">Position Controls</span>
<span class="t" style="left:1594.58px;transform:scaleX(0.9650);top:285.90px;font-size:12px;line-height:12px;color:#c0c0c0;font-weight:400;white-space:nowrap;">Position X</span>
<div style="left:1657px;top:290.1px;width:136px;height:3px;border-radius:1.5px;background:#17171a"></div>
<div style="left:1720.5px;top:287.1px;width:9px;height:9px;border-radius:50%;background:#9c9c9c"></div>
<div style="left:1804px;top:282.1px;width:55px;height:19px;border-radius:3px;background:#141416;border:1px solid #0c0c0e"></div>
<span class="t" style="left:1821.96px;top:285.05px;font-size:13px;line-height:13px;color:#f4f4f4;font-weight:400;white-space:nowrap;">0.0</span>
<div style="left:1881.0px;top:288.1px;width:7px;height:7px;background:#a8a8a8;transform:rotate(45deg) scale(0.9)"></div>
<span class="t" style="left:1594.58px;transform:scaleX(0.9689);top:310.90px;font-size:12px;line-height:12px;color:#c0c0c0;font-weight:400;white-space:nowrap;">Position Y</span>
<div style="left:1657px;top:315.1px;width:136px;height:3px;border-radius:1.5px;background:#17171a"></div>
<div style="left:1720.5px;top:312.1px;width:9px;height:9px;border-radius:50%;background:#9c9c9c"></div>
<div style="left:1804px;top:307.1px;width:55px;height:19px;border-radius:3px;background:#141416;border:1px solid #0c0c0e"></div>
<span class="t" style="left:1821.96px;top:310.05px;font-size:13px;line-height:13px;color:#f4f4f4;font-weight:400;white-space:nowrap;">0.0</span>
<div style="left:1881.0px;top:313.1px;width:7px;height:7px;background:#a8a8a8;transform:rotate(45deg) scale(0.9)"></div>
<span class="t" style="left:1615.28px;transform:scaleX(1.0245);top:335.90px;font-size:12px;line-height:12px;color:#c0c0c0;font-weight:400;white-space:nowrap;">Zoom</span>
<div style="left:1657px;top:340.1px;width:136px;height:3px;border-radius:1.5px;background:#17171a"></div>
<div style="left:1681.5px;top:337.1px;width:9px;height:9px;border-radius:50%;background:#9c9c9c"></div>
<div style="left:1804px;top:332.1px;width:55px;height:19px;border-radius:3px;background:#141416;border:1px solid #0c0c0e"></div>
<span class="t" style="left:1821.96px;top:335.05px;font-size:13px;line-height:13px;color:#f4f4f4;font-weight:400;white-space:nowrap;">1.0</span>
<div style="left:1881.0px;top:338.1px;width:7px;height:7px;background:#a8a8a8;transform:rotate(45deg) scale(0.9)"></div>
<span class="t" style="left:1612.08px;transform:scaleX(0.9797);top:360.90px;font-size:12px;line-height:12px;color:#c0c0c0;font-weight:400;white-space:nowrap;">Rotate</span>
<div style="left:1657px;top:365.1px;width:136px;height:3px;border-radius:1.5px;background:#17171a"></div>
<div style="left:1720.5px;top:362.1px;width:9px;height:9px;border-radius:50%;background:#9c9c9c"></div>
<div style="left:1804px;top:357.1px;width:55px;height:19px;border-radius:3px;background:#141416;border:1px solid #0c0c0e"></div>
<span class="t" style="left:1821.96px;top:360.05px;font-size:13px;line-height:13px;color:#f4f4f4;font-weight:400;white-space:nowrap;">0.0</span>
<div style="left:1881.0px;top:363.1px;width:7px;height:7px;background:#a8a8a8;transform:rotate(45deg) scale(0.9)"></div>
<span class="t" style="left:1615.08px;transform:scaleX(1.0310);top:385.90px;font-size:12px;line-height:12px;color:#c0c0c0;font-weight:400;white-space:nowrap;">Width</span>
<div style="left:1657px;top:390.1px;width:136px;height:3px;border-radius:1.5px;background:#17171a"></div>
<div style="left:1681.5px;top:387.1px;width:9px;height:9px;border-radius:50%;background:#9c9c9c"></div>
<div style="left:1804px;top:382.1px;width:55px;height:19px;border-radius:3px;background:#141416;border:1px solid #0c0c0e"></div>
<span class="t" style="left:1821.96px;top:385.05px;font-size:13px;line-height:13px;color:#f4f4f4;font-weight:400;white-space:nowrap;">1.0</span>
<div style="left:1881.0px;top:388.1px;width:7px;height:7px;background:#a8a8a8;transform:rotate(45deg) scale(0.9)"></div>
<span class="t" style="left:1612.08px;top:410.90px;font-size:12px;line-height:12px;color:#c0c0c0;font-weight:400;white-space:nowrap;">Height</span>
<div style="left:1657px;top:415.1px;width:136px;height:3px;border-radius:1.5px;background:#17171a"></div>
<div style="left:1681.5px;top:412.1px;width:9px;height:9px;border-radius:50%;background:#9c9c9c"></div>
<div style="left:1804px;top:407.1px;width:55px;height:19px;border-radius:3px;background:#141416;border:1px solid #0c0c0e"></div>
<span class="t" style="left:1821.96px;top:410.05px;font-size:13px;line-height:13px;color:#f4f4f4;font-weight:400;white-space:nowrap;">1.0</span>
<div style="left:1881.0px;top:413.1px;width:7px;height:7px;background:#a8a8a8;transform:rotate(45deg) scale(0.9)"></div>
<span class="t" style="left:1620.28px;transform:scaleX(0.9907);top:435.90px;font-size:12px;line-height:12px;color:#c0c0c0;font-weight:400;white-space:nowrap;">Pitch</span>
<div style="left:1657px;top:440.1px;width:136px;height:3px;border-radius:1.5px;background:#17171a"></div>
<div style="left:1720.5px;top:437.1px;width:9px;height:9px;border-radius:50%;background:#9c9c9c"></div>
<div style="left:1804px;top:432.1px;width:55px;height:19px;border-radius:3px;background:#141416;border:1px solid #0c0c0e"></div>
<span class="t" style="left:1821.96px;top:435.05px;font-size:13px;line-height:13px;color:#f4f4f4;font-weight:400;white-space:nowrap;">0.0</span>
<div style="left:1881.0px;top:438.1px;width:7px;height:7px;background:#a8a8a8;transform:rotate(45deg) scale(0.9)"></div>
<span class="t" style="left:1624.58px;transform:scaleX(0.9861);top:460.90px;font-size:12px;line-height:12px;color:#c0c0c0;font-weight:400;white-space:nowrap;">Yaw</span>
<div style="left:1657px;top:465.1px;width:136px;height:3px;border-radius:1.5px;background:#17171a"></div>
<div style="left:1720.5px;top:462.1px;width:9px;height:9px;border-radius:50%;background:#9c9c9c"></div>
<div style="left:1804px;top:457.1px;width:55px;height:19px;border-radius:3px;background:#141416;border:1px solid #0c0c0e"></div>
<span class="t" style="left:1821.96px;top:460.05px;font-size:13px;line-height:13px;color:#f4f4f4;font-weight:400;white-space:nowrap;">0.0</span>
<div style="left:1881.0px;top:463.1px;width:7px;height:7px;background:#a8a8a8;transform:rotate(45deg) scale(0.9)"></div>
<div style="left:1656px;top:484.5px;width:15px;height:15px;border-radius:2px;background:#1e1e22;border:1px solid #0e0e10"></div>
<span class="t" style="left:1680.58px;transform:scaleX(0.9796);top:485.80px;font-size:12px;line-height:12px;color:#c0c0c0;font-weight:400;white-space:nowrap;">Flip Horizontal</span>
<div style="left:1656px;top:509.5px;width:15px;height:15px;border-radius:2px;background:#1e1e22;border:1px solid #0e0e10"></div>
<span class="t" style="left:1680.58px;transform:scaleX(0.9615);top:510.80px;font-size:12px;line-height:12px;color:#c0c0c0;font-weight:400;white-space:nowrap;">Flip Vertical</span>
<div style="left:1514px;top:535px;width:390px;height:1px;background:#111113;"></div>
<svg style="left:1518px;top:546px;" width="11" height="8" viewBox="0 0 11 8"><polyline points="1,1 5.5,6 10,1" fill="none" stroke="#b8b8b8" stroke-width="1.5"/></svg>
<span class="t" style="left:1534.62px;top:544.45px;font-size:13px;line-height:13px;color:#c4c4c4;font-weight:400;white-space:nowrap;">Image Adjustment</span>
<div style="left:1656px;top:569.5px;width:15px;height:15px;border-radius:2px;background:#1e1e22;border:1px solid #0e0e10"></div>
<svg style="left:1657px;top:570px;" width="13" height="13" viewBox="0 0 13 13"><polyline points="2.5,7 5.3,10 10.5,3" fill="none" stroke="#ffffff" stroke-width="1.8"/></svg>
<span class="t" style="left:1680.28px;transform:scaleX(0.9831);top:570.80px;font-size:12px;line-height:12px;color:#c0c0c0;font-weight:400;white-space:nowrap;">Crop / Uncrop</span>
<div style="left:1635px;top:558px;width:151px;height:37px;border:3px solid #b4e51e"></div>
<span class="t" style="left:1794.94px;transform:scaleX(0.9597);top:567.45px;font-size:21px;line-height:21px;color:#b4e51e;font-weight:700;white-space:nowrap;">Check disini</span>
<span class="t" style="left:1598.28px;transform:scaleX(0.9814);top:596.30px;font-size:12px;line-height:12px;color:#c0c0c0;font-weight:400;white-space:nowrap;">Crop Left</span>
<div style="left:1657px;top:600.5px;width:136px;height:3px;border-radius:1.5px;background:#17171a"></div>
<div style="left:1720.5px;top:597.5px;width:9px;height:9px;border-radius:50%;background:#9c9c9c"></div>
<div style="left:1804px;top:592.5px;width:55px;height:19px;border-radius:3px;background:#141416;border:1px solid #0c0c0e"></div>
<span class="t" style="left:1821.96px;top:595.45px;font-size:13px;line-height:13px;color:#f4f4f4;font-weight:400;white-space:nowrap;">0.0</span>
<div style="left:1881.0px;top:598.5px;width:7px;height:7px;background:#a8a8a8;transform:rotate(45deg) scale(0.9)"></div>
<span class="t" style="left:1591.58px;transform:scaleX(0.9613);top:621.30px;font-size:12px;line-height:12px;color:#c0c0c0;font-weight:400;white-space:nowrap;">Crop Right</span>
<div style="left:1657px;top:625.5px;width:136px;height:3px;border-radius:1.5px;background:#17171a"></div>
<div style="left:1720.5px;top:622.5px;width:9px;height:9px;border-radius:50%;background:#9c9c9c"></div>
<div style="left:1804px;top:617.5px;width:55px;height:19px;border-radius:3px;background:#141416;border:1px solid #0c0c0e"></div>
<span class="t" style="left:1821.96px;top:620.45px;font-size:13px;line-height:13px;color:#f4f4f4;font-weight:400;white-space:nowrap;">0.0</span>
<div style="left:1881.0px;top:623.5px;width:7px;height:7px;background:#a8a8a8;transform:rotate(45deg) scale(0.9)"></div>
<span class="t" style="left:1598.28px;top:646.30px;font-size:12px;line-height:12px;color:#c0c0c0;font-weight:400;white-space:nowrap;">Crop Top</span>
<div style="left:1657px;top:650.5px;width:136px;height:3px;border-radius:1.5px;background:#17171a"></div>
<div style="left:1720.5px;top:647.5px;width:9px;height:9px;border-radius:50%;background:#9c9c9c"></div>
<div style="left:1804px;top:642.5px;width:55px;height:19px;border-radius:3px;background:#141416;border:1px solid #0c0c0e"></div>
<span class="t" style="left:1821.96px;top:645.45px;font-size:13px;line-height:13px;color:#f4f4f4;font-weight:400;white-space:nowrap;">0.0</span>
<div style="left:1881.0px;top:648.5px;width:7px;height:7px;background:#a8a8a8;transform:rotate(45deg) scale(0.9)"></div>
<span class="t" style="left:1579.48px;top:671.30px;font-size:12px;line-height:12px;color:#c0c0c0;font-weight:400;white-space:nowrap;">Crop Bottom</span>
<div style="left:1657px;top:675.5px;width:136px;height:3px;border-radius:1.5px;background:#17171a"></div>
<div style="left:1720.5px;top:672.5px;width:9px;height:9px;border-radius:50%;background:#9c9c9c"></div>
<div style="left:1804px;top:667.5px;width:55px;height:19px;border-radius:3px;background:#141416;border:1px solid #0c0c0e"></div>
<span class="t" style="left:1821.96px;top:670.45px;font-size:13px;line-height:13px;color:#f4f4f4;font-weight:400;white-space:nowrap;">0.0</span>
<div style="left:1881.0px;top:673.5px;width:7px;height:7px;background:#a8a8a8;transform:rotate(45deg) scale(0.9)"></div>
<span class="t" style="left:1574.18px;transform:scaleX(0.9293);top:696.30px;font-size:12px;line-height:12px;color:#c0c0c0;font-weight:400;white-space:nowrap;">Edge Softness</span>
<div style="left:1657px;top:700.5px;width:136px;height:3px;border-radius:1.5px;background:#17171a"></div>
<div style="left:1657.5px;top:697.5px;width:9px;height:9px;border-radius:50%;background:#9c9c9c"></div>
<div style="left:1804px;top:692.5px;width:55px;height:19px;border-radius:3px;background:#141416;border:1px solid #0c0c0e"></div>
<span class="t" style="left:1821.96px;top:695.45px;font-size:13px;line-height:13px;color:#f4f4f4;font-weight:400;white-space:nowrap;">0.0</span>
<div style="left:1881.0px;top:698.5px;width:7px;height:7px;background:#a8a8a8;transform:rotate(45deg) scale(0.9)"></div>
<span class="t" style="left:1568.78px;transform:scaleX(0.9421);top:721.30px;font-size:12px;line-height:12px;color:#c0c0c0;font-weight:400;white-space:nowrap;">Edge Rounding</span>
<div style="left:1657px;top:725.5px;width:136px;height:3px;border-radius:1.5px;background:#17171a"></div>
<div style="left:1657.5px;top:722.5px;width:9px;height:9px;border-radius:50%;background:#9c9c9c"></div>
<div style="left:1804px;top:717.5px;width:55px;height:19px;border-radius:3px;background:#141416;border:1px solid #0c0c0e"></div>
<span class="t" style="left:1821.96px;top:720.45px;font-size:13px;line-height:13px;color:#f4f4f4;font-weight:400;white-space:nowrap;">0.0</span>
<div style="left:1881.0px;top:723.5px;width:7px;height:7px;background:#a8a8a8;transform:rotate(45deg) scale(0.9)"></div>
<div style="left:1514px;top:745px;width:390px;height:1px;background:#111113;"></div>
<svg style="left:1518px;top:755px;" width="7" height="12" viewBox="0 0 7 12"><polyline points="1,1 5.5,6 1,11" fill="none" stroke="#b8b8b8" stroke-width="1.5"/></svg>
<span class="t" style="left:1534.62px;transform:scaleX(1.0129);top:754.45px;font-size:13px;line-height:13px;color:#c4c4c4;font-weight:400;white-space:nowrap;">Animation</span>
<div style="left:1514px;top:776px;width:390px;height:1px;background:#111113;"></div>
<svg style="left:1518px;top:786px;" width="7" height="12" viewBox="0 0 7 12"><polyline points="1,1 5.5,6 1,11" fill="none" stroke="#b8b8b8" stroke-width="1.5"/></svg>
<span class="t" style="left:1534.62px;transform:scaleX(0.9654);top:785.45px;font-size:13px;line-height:13px;color:#c4c4c4;font-weight:400;white-space:nowrap;">Advanced Options</span>
<div style="left:1499px;top:807px;width:421px;height:1px;background:#151518;"></div></body></html>
